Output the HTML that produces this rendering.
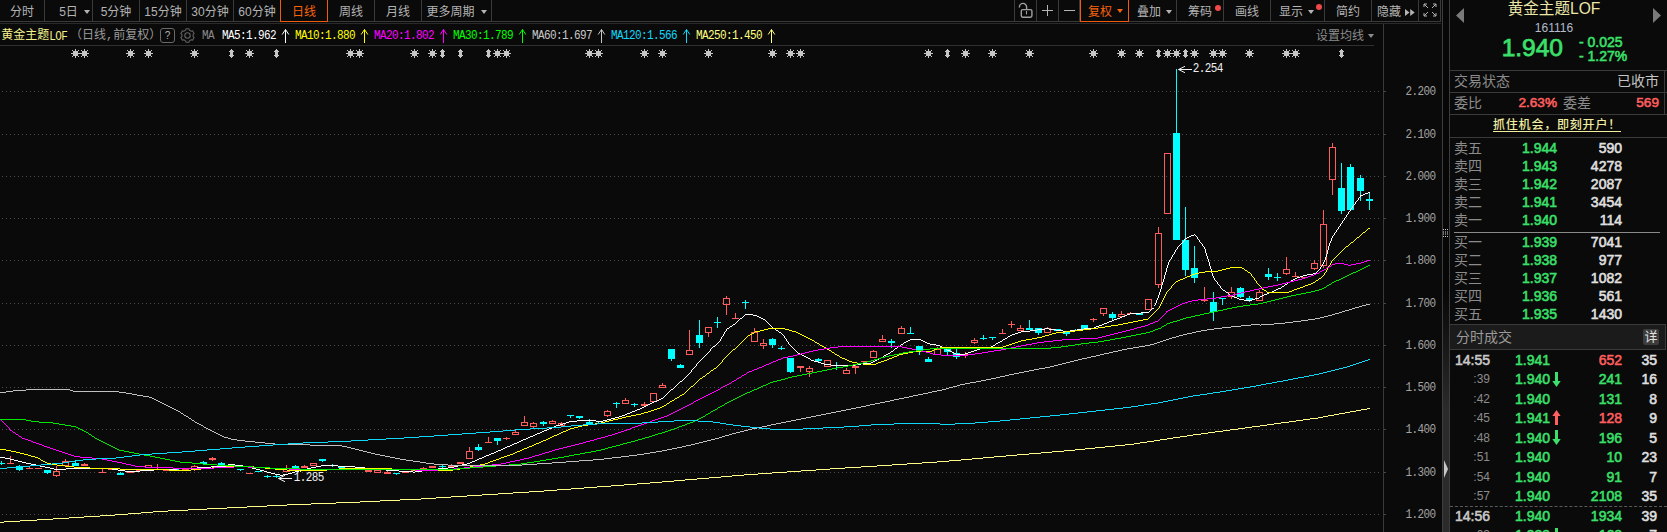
<!DOCTYPE html>
<html lang="zh-CN"><head><meta charset="utf-8"><title>黄金主题LOF 161116 日线</title>
<style>

html,body{margin:0;padding:0;background:#0a0a0a;}
body{width:1667px;height:532px;overflow:hidden;position:relative;font-family:"Liberation Sans","Noto Sans CJK SC",sans-serif;color:#b8b8b8;}
.abs{position:absolute;white-space:nowrap;}
#root{position:absolute;left:0;top:0;width:1667px;height:532px;overflow:hidden;background:#0a0a0a;}
.tab{position:absolute;top:0;height:21px;line-height:24px;box-sizing:border-box;border-right:1px solid #3a3a3a;text-align:center;font-size:12px;color:#b4b4b4;white-space:nowrap;}
.tab.act{border:1px solid #ee5c0c;border-top:none;color:#f8640f;line-height:24px;height:22px;z-index:2;}
.mono{font-family:"Liberation Mono","Noto Sans Mono CJK SC",monospace;font-size:11px;letter-spacing:-0.6px;display:inline-block;transform:scaleY(1.1);transform-origin:0 0;}
.song{font-family:"Liberation Mono","Noto Sans CJK SC",sans-serif;}
.hl{position:absolute;height:1px;background:#3a3a3a;}
.vl{position:absolute;width:1px;background:#3a3a3a;}
.b{font-weight:normal;-webkit-text-stroke:0.55px;}
.g{color:#3be06a;}
.r{color:#ff5f5f;}
.w{color:#e0e0e0;}
.rp{position:absolute;white-space:nowrap;font-size:14px;line-height:18px;height:18px;}
.rt{text-align:right;}

</style></head><body><div id="root">
<div class="tab" style="left:0px;width:45px">分时</div>
<div class="tab" style="left:45px;width:48px;padding-left:12px">5日<span style="display:inline-block;width:0;height:0;border-left:3px solid transparent;border-right:3px solid transparent;border-top:4px solid #b4b4b4;margin-left:6px;vertical-align:2px"></span></div>
<div class="tab" style="left:93px;width:47px">5分钟</div>
<div class="tab" style="left:140px;width:47px">15分钟</div>
<div class="tab" style="left:187px;width:47px">30分钟</div>
<div class="tab" style="left:234px;width:47px">60分钟</div>
<div class="tab act" style="left:280px;width:48px">日线</div>
<div class="tab" style="left:328px;width:47px">周线</div>
<div class="tab" style="left:375px;width:47px">月线</div>
<div class="tab" style="left:422px;width:70px">更多周期<span style="display:inline-block;width:0;height:0;border-left:3px solid transparent;border-right:3px solid transparent;border-top:4px solid #b4b4b4;margin-left:6px;vertical-align:2px"></span></div>
<div class="vl" style="left:1014px;top:0;height:21px"></div>
<div class="tab" style="left:1014px;width:23px"><svg width="20" height="20" viewBox="0 0 20 20" style="position:absolute;left:3px;top:0px" fill="none" stroke="#a0a0a0" stroke-width="1.4"><rect x="4.3" y="9.6" width="10.6" height="7.6" rx="1.4"/><path d="M2.4 7.4V7A3.6 3.6 0 0 1 9.6 7V9.6"/><path d="M9.5 11v3.4" stroke-width="1.1"/></svg></div>
<div class="tab" style="left:1037px;width:22px"><svg width="12" height="12" viewBox="0 0 12 12" style="position:absolute;left:4px;top:4px" stroke="#b4b4b4" stroke-width="1" shape-rendering="crispEdges"><path d="M6.5 1V12M1 6.5H12"/></svg></div>
<div class="tab" style="left:1059px;width:21px"><svg width="12" height="12" viewBox="0 0 12 12" style="position:absolute;left:4px;top:4px" stroke="#b4b4b4" stroke-width="1" shape-rendering="crispEdges"><path d="M1 6.5H12"/></svg></div>
<div class="tab act" style="left:1080px;width:49px;text-align:left;padding-left:7px">复权<span style="display:inline-block;width:0;height:0;border-left:3px solid transparent;border-right:3px solid transparent;border-top:4px solid #f8640f;margin-left:5px;vertical-align:3px"></span></div>
<div class="tab" style="left:1129px;width:48px;text-align:left;padding-left:8px">叠加<span style="display:inline-block;width:0;height:0;border-left:3px solid transparent;border-right:3px solid transparent;border-top:4px solid #b4b4b4;margin-left:5px;vertical-align:2px"></span></div>
<div class="tab" style="left:1177px;width:47px;text-align:left;padding-left:11px">筹码<span style="position:absolute;right:2px;top:5px;width:6px;height:6px;border-radius:3px;background:#f04848"></span></div>
<div class="tab" style="left:1224px;width:47px">画线</div>
<div class="tab" style="left:1271px;width:54px;text-align:left;padding-left:8px">显示<span style="display:inline-block;width:0;height:0;border-left:3px solid transparent;border-right:3px solid transparent;border-top:4px solid #b4b4b4;margin-left:5px;vertical-align:2px"></span><span style="position:absolute;right:2px;top:4px;width:6px;height:6px;border-radius:3px;background:#f04848"></span></div>
<div class="tab" style="left:1325px;width:47px">简约</div>
<div class="tab" style="left:1372px;width:47px;text-align:left;padding-left:5px">隐藏<svg width="10" height="7" viewBox="0 0 10 7" style="margin-left:4px;vertical-align:0px"><path d="M0 0L4.5 3.5L0 7ZM5.2 0L9.7 3.5L5.2 7Z" fill="#b4b4b4"/></svg></div>
<div class="tab" style="left:1419px;width:22px"><svg width="14" height="14" viewBox="0 0 14 14" style="position:absolute;left:4px;top:3px" fill="none" stroke="#b4b4b4" stroke-width="1"><path d="M1 4V1H4M1 1L5 5M10 1H13V4M13 1L9 5M1 10V13H4M1 13L5 9M10 13H13V10M13 13L9 9"/></svg></div>
<div class="hl" style="left:0;top:21px;width:1441px"></div>
<div class="hl" style="left:0;top:23px;width:1441px;background:#2a2a2a"></div>
<div class="abs song" style="left:1.3px;top:28px;font-size:12px;line-height:16px;color:#f5f08a;letter-spacing:0">黄金主题<span class="mono" style="font-size:11px;line-height:14px;vertical-align:top;position:relative;top:0.6px">LOF</span></div>
<div class="abs song" style="left:70px;top:28px;font-size:12px;line-height:16px;color:#9a9a9a">（日线,前复权）</div>
<div class="abs" style="left:160px;top:28px;width:15px;height:15px;box-sizing:border-box;border:1px solid #6a6a6a;border-radius:3px;font-size:10px;line-height:13px;text-align:center;color:#b0b0b0">?</div>
<svg class="abs" style="left:180.4px;top:27.6px" width="15" height="15" viewBox="0 0 15 15" fill="none" stroke="#626262" stroke-width="1.1" stroke-linejoin="round"><path d="M9.05 0.78L5.95 0.78L5.64 2.11L3.76 3.20L2.45 2.79L0.90 5.48L1.90 6.41L1.90 8.59L0.90 9.52L2.45 12.21L3.76 11.80L5.64 12.89L5.95 14.22L9.05 14.22L9.36 12.89L11.24 11.80L12.55 12.21L14.10 9.52L13.10 8.59L13.10 6.41L14.10 5.48L12.55 2.79L11.24 3.20L9.36 2.11Z"/><circle cx="7.5" cy="7.5" r="2.7"/></svg>
<div class="abs mono" style="left:202px;top:28.1px;line-height:14px;color:#8a8a8a">MA</div>
<div class="abs mono" style="left:222px;top:28.1px;line-height:14px;color:#ffffff">MA5:1.962</div>
<svg class="abs" style="left:281px;top:28px" width="9" height="16" viewBox="0 0 9 16" fill="none" stroke="#ffffff" stroke-width="1"><path d="M4.5 15V1.5M1.2 6.5L4.5 1.5L7.8 6.5"/></svg>
<div class="abs mono" style="left:295px;top:28.1px;line-height:14px;color:#ffff00">MA10:1.880</div>
<svg class="abs" style="left:360px;top:28px" width="9" height="16" viewBox="0 0 9 16" fill="none" stroke="#ffff00" stroke-width="1"><path d="M4.5 15V1.5M1.2 6.5L4.5 1.5L7.8 6.5"/></svg>
<div class="abs mono" style="left:374px;top:28.1px;line-height:14px;color:#ff00ff">MA20:1.802</div>
<svg class="abs" style="left:439px;top:28px" width="9" height="16" viewBox="0 0 9 16" fill="none" stroke="#ff00ff" stroke-width="1"><path d="M4.5 15V1.5M1.2 6.5L4.5 1.5L7.8 6.5"/></svg>
<div class="abs mono" style="left:453px;top:28.1px;line-height:14px;color:#00ff00">MA30:1.789</div>
<svg class="abs" style="left:518px;top:28px" width="9" height="16" viewBox="0 0 9 16" fill="none" stroke="#00ff00" stroke-width="1"><path d="M4.5 15V1.5M1.2 6.5L4.5 1.5L7.8 6.5"/></svg>
<div class="abs mono" style="left:532px;top:28.1px;line-height:14px;color:#c8c8c8">MA60:1.697</div>
<svg class="abs" style="left:597px;top:28px" width="9" height="16" viewBox="0 0 9 16" fill="none" stroke="#c8c8c8" stroke-width="1"><path d="M4.5 15V1.5M1.2 6.5L4.5 1.5L7.8 6.5"/></svg>
<div class="abs mono" style="left:611px;top:28.1px;line-height:14px;color:#10d8f8">MA120:1.566</div>
<svg class="abs" style="left:682px;top:28px" width="9" height="16" viewBox="0 0 9 16" fill="none" stroke="#10d8f8" stroke-width="1"><path d="M4.5 15V1.5M1.2 6.5L4.5 1.5L7.8 6.5"/></svg>
<div class="abs mono" style="left:696px;top:28.1px;line-height:14px;color:#ffff80">MA250:1.450</div>
<svg class="abs" style="left:767px;top:28px" width="9" height="16" viewBox="0 0 9 16" fill="none" stroke="#ffff80" stroke-width="1"><path d="M4.5 15V1.5M1.2 6.5L4.5 1.5L7.8 6.5"/></svg>
<div class="abs" style="left:1316px;top:28px;font-size:12px;line-height:16px;color:#8c8c8c">设置均线<span style="display:inline-block;width:0;height:0;border-left:3px solid transparent;border-right:3px solid transparent;border-top:4px solid #8c8c8c;margin-left:4px;vertical-align:2px"></span></div>
<div class="hl" style="left:0;top:45px;width:1374px;background:#303030"></div>
<svg class="abs" style="left:0;top:0" width="1442" height="532" viewBox="0 0 1442 532">
<line x1="2" y1="91.5" x2="1380" y2="91.5" stroke="#4c4c4c" stroke-width="1" stroke-dasharray="1 3"/>
<line x1="1384" y1="91.5" x2="1386" y2="91.5" stroke="#484848" stroke-width="1"/>
<text transform="translate(1405.5 95.1) scale(1 1.1)" font-family="Liberation Mono,monospace" font-size="11" letter-spacing="-0.6" fill="#a4a4a4">2.200</text>
<line x1="2" y1="134.5" x2="1380" y2="134.5" stroke="#4c4c4c" stroke-width="1" stroke-dasharray="1 3"/>
<line x1="1384" y1="134.5" x2="1386" y2="134.5" stroke="#484848" stroke-width="1"/>
<text transform="translate(1405.5 138.1) scale(1 1.1)" font-family="Liberation Mono,monospace" font-size="11" letter-spacing="-0.6" fill="#a4a4a4">2.100</text>
<line x1="2" y1="176.5" x2="1380" y2="176.5" stroke="#4c4c4c" stroke-width="1" stroke-dasharray="1 3"/>
<line x1="1384" y1="176.5" x2="1386" y2="176.5" stroke="#484848" stroke-width="1"/>
<text transform="translate(1405.5 180.1) scale(1 1.1)" font-family="Liberation Mono,monospace" font-size="11" letter-spacing="-0.6" fill="#a4a4a4">2.000</text>
<line x1="2" y1="218.5" x2="1380" y2="218.5" stroke="#4c4c4c" stroke-width="1" stroke-dasharray="1 3"/>
<line x1="1384" y1="218.5" x2="1386" y2="218.5" stroke="#484848" stroke-width="1"/>
<text transform="translate(1405.5 222.1) scale(1 1.1)" font-family="Liberation Mono,monospace" font-size="11" letter-spacing="-0.6" fill="#a4a4a4">1.900</text>
<line x1="2" y1="260.5" x2="1380" y2="260.5" stroke="#4c4c4c" stroke-width="1" stroke-dasharray="1 3"/>
<line x1="1384" y1="260.5" x2="1386" y2="260.5" stroke="#484848" stroke-width="1"/>
<text transform="translate(1405.5 264.1) scale(1 1.1)" font-family="Liberation Mono,monospace" font-size="11" letter-spacing="-0.6" fill="#a4a4a4">1.800</text>
<line x1="2" y1="303.5" x2="1380" y2="303.5" stroke="#4c4c4c" stroke-width="1" stroke-dasharray="1 3"/>
<line x1="1384" y1="303.5" x2="1386" y2="303.5" stroke="#484848" stroke-width="1"/>
<text transform="translate(1405.5 307.1) scale(1 1.1)" font-family="Liberation Mono,monospace" font-size="11" letter-spacing="-0.6" fill="#a4a4a4">1.700</text>
<line x1="2" y1="345.5" x2="1380" y2="345.5" stroke="#4c4c4c" stroke-width="1" stroke-dasharray="1 3"/>
<line x1="1384" y1="345.5" x2="1386" y2="345.5" stroke="#484848" stroke-width="1"/>
<text transform="translate(1405.5 349.1) scale(1 1.1)" font-family="Liberation Mono,monospace" font-size="11" letter-spacing="-0.6" fill="#a4a4a4">1.600</text>
<line x1="2" y1="387.5" x2="1380" y2="387.5" stroke="#4c4c4c" stroke-width="1" stroke-dasharray="1 3"/>
<line x1="1384" y1="387.5" x2="1386" y2="387.5" stroke="#484848" stroke-width="1"/>
<text transform="translate(1405.5 391.1) scale(1 1.1)" font-family="Liberation Mono,monospace" font-size="11" letter-spacing="-0.6" fill="#a4a4a4">1.500</text>
<line x1="2" y1="429.5" x2="1380" y2="429.5" stroke="#4c4c4c" stroke-width="1" stroke-dasharray="1 3"/>
<line x1="1384" y1="429.5" x2="1386" y2="429.5" stroke="#484848" stroke-width="1"/>
<text transform="translate(1405.5 433.1) scale(1 1.1)" font-family="Liberation Mono,monospace" font-size="11" letter-spacing="-0.6" fill="#a4a4a4">1.400</text>
<line x1="2" y1="472.5" x2="1380" y2="472.5" stroke="#4c4c4c" stroke-width="1" stroke-dasharray="1 3"/>
<line x1="1384" y1="472.5" x2="1386" y2="472.5" stroke="#484848" stroke-width="1"/>
<text transform="translate(1405.5 476.1) scale(1 1.1)" font-family="Liberation Mono,monospace" font-size="11" letter-spacing="-0.6" fill="#a4a4a4">1.300</text>
<line x1="2" y1="514.5" x2="1380" y2="514.5" stroke="#4c4c4c" stroke-width="1" stroke-dasharray="1 3"/>
<line x1="1384" y1="514.5" x2="1386" y2="514.5" stroke="#484848" stroke-width="1"/>
<text transform="translate(1405.5 518.1) scale(1 1.1)" font-family="Liberation Mono,monospace" font-size="11" letter-spacing="-0.6" fill="#a4a4a4">1.200</text>
<line x1="1383.5" y1="24" x2="1383.5" y2="532" stroke="#3a3a3a" stroke-width="1"/>
<path d="M75 49h1v9h-1zM71 53h9v1h-9zM73 51h5v5h-5zM72 50h1v1h-1zM78 50h1v1h-1zM72 56h1v1h-1zM78 56h1v1h-1zM84 49h1v9h-1zM80 53h9v1h-9zM82 51h5v5h-5zM81 50h1v1h-1zM87 50h1v1h-1zM81 56h1v1h-1zM87 56h1v1h-1zM130 49h1v9h-1zM126 53h9v1h-9zM128 51h5v5h-5zM127 50h1v1h-1zM133 50h1v1h-1zM127 56h1v1h-1zM133 56h1v1h-1zM148 49h1v9h-1zM144 53h9v1h-9zM146 51h5v5h-5zM145 50h1v1h-1zM151 50h1v1h-1zM145 56h1v1h-1zM151 56h1v1h-1zM194 49h1v9h-1zM190 53h9v1h-9zM192 51h5v5h-5zM191 50h1v1h-1zM197 50h1v1h-1zM191 56h1v1h-1zM197 56h1v1h-1zM231 49h1v9h-1zM230 50h3v7h-3zM229 51h5v1h-5zM229 55h5v1h-5zM249 49h1v9h-1zM245 53h9v1h-9zM247 51h5v5h-5zM246 50h1v1h-1zM252 50h1v1h-1zM246 56h1v1h-1zM252 56h1v1h-1zM276 49h1v9h-1zM275 50h3v7h-3zM274 51h5v1h-5zM274 55h5v1h-5zM350 49h1v9h-1zM346 53h9v1h-9zM348 51h5v5h-5zM347 50h1v1h-1zM353 50h1v1h-1zM347 56h1v1h-1zM353 56h1v1h-1zM359 49h1v9h-1zM355 53h9v1h-9zM357 51h5v5h-5zM356 50h1v1h-1zM362 50h1v1h-1zM356 56h1v1h-1zM362 56h1v1h-1zM414 49h1v9h-1zM410 53h9v1h-9zM412 51h5v5h-5zM411 50h1v1h-1zM417 50h1v1h-1zM411 56h1v1h-1zM417 56h1v1h-1zM432 49h1v9h-1zM428 53h9v1h-9zM430 51h5v5h-5zM429 50h1v1h-1zM435 50h1v1h-1zM429 56h1v1h-1zM435 56h1v1h-1zM442 49h1v9h-1zM441 50h3v7h-3zM440 51h5v1h-5zM440 55h5v1h-5zM460 49h1v9h-1zM459 50h3v7h-3zM458 51h5v1h-5zM458 55h5v1h-5zM488 49h1v9h-1zM487 50h3v7h-3zM486 51h5v1h-5zM486 55h5v1h-5zM497 49h1v9h-1zM493 53h9v1h-9zM495 51h5v5h-5zM494 50h1v1h-1zM500 50h1v1h-1zM494 56h1v1h-1zM500 56h1v1h-1zM506 49h1v9h-1zM502 53h9v1h-9zM504 51h5v5h-5zM503 50h1v1h-1zM509 50h1v1h-1zM503 56h1v1h-1zM509 56h1v1h-1zM589 49h1v9h-1zM585 53h9v1h-9zM587 51h5v5h-5zM586 50h1v1h-1zM592 50h1v1h-1zM586 56h1v1h-1zM592 56h1v1h-1zM598 49h1v9h-1zM594 53h9v1h-9zM596 51h5v5h-5zM595 50h1v1h-1zM601 50h1v1h-1zM595 56h1v1h-1zM601 56h1v1h-1zM644 49h1v9h-1zM640 53h9v1h-9zM642 51h5v5h-5zM641 50h1v1h-1zM647 50h1v1h-1zM641 56h1v1h-1zM647 56h1v1h-1zM662 49h1v9h-1zM658 53h9v1h-9zM660 51h5v5h-5zM659 50h1v1h-1zM665 50h1v1h-1zM659 56h1v1h-1zM665 56h1v1h-1zM708 49h1v9h-1zM704 53h9v1h-9zM706 51h5v5h-5zM705 50h1v1h-1zM711 50h1v1h-1zM705 56h1v1h-1zM711 56h1v1h-1zM772 49h1v9h-1zM768 53h9v1h-9zM770 51h5v5h-5zM769 50h1v1h-1zM775 50h1v1h-1zM769 56h1v1h-1zM775 56h1v1h-1zM790 49h1v9h-1zM786 53h9v1h-9zM788 51h5v5h-5zM787 50h1v1h-1zM793 50h1v1h-1zM787 56h1v1h-1zM793 56h1v1h-1zM800 49h1v9h-1zM796 53h9v1h-9zM798 51h5v5h-5zM797 50h1v1h-1zM803 50h1v1h-1zM797 56h1v1h-1zM803 56h1v1h-1zM928 49h1v9h-1zM924 53h9v1h-9zM926 51h5v5h-5zM925 50h1v1h-1zM931 50h1v1h-1zM925 56h1v1h-1zM931 56h1v1h-1zM947 49h1v9h-1zM946 50h3v7h-3zM945 51h5v1h-5zM945 55h5v1h-5zM965 49h1v9h-1zM961 53h9v1h-9zM963 51h5v5h-5zM962 50h1v1h-1zM968 50h1v1h-1zM962 56h1v1h-1zM968 56h1v1h-1zM992 49h1v9h-1zM988 53h9v1h-9zM990 51h5v5h-5zM989 50h1v1h-1zM995 50h1v1h-1zM989 56h1v1h-1zM995 56h1v1h-1zM1029 49h1v9h-1zM1025 53h9v1h-9zM1027 51h5v5h-5zM1026 50h1v1h-1zM1032 50h1v1h-1zM1026 56h1v1h-1zM1032 56h1v1h-1zM1093 49h1v9h-1zM1089 53h9v1h-9zM1091 51h5v5h-5zM1090 50h1v1h-1zM1096 50h1v1h-1zM1090 56h1v1h-1zM1096 56h1v1h-1zM1121 49h1v9h-1zM1117 53h9v1h-9zM1119 51h5v5h-5zM1118 50h1v1h-1zM1124 50h1v1h-1zM1118 56h1v1h-1zM1124 56h1v1h-1zM1139 49h1v9h-1zM1135 53h9v1h-9zM1137 51h5v5h-5zM1136 50h1v1h-1zM1142 50h1v1h-1zM1136 56h1v1h-1zM1142 56h1v1h-1zM1158 49h1v9h-1zM1157 50h3v7h-3zM1156 51h5v1h-5zM1156 55h5v1h-5zM1167 49h1v9h-1zM1163 53h9v1h-9zM1165 51h5v5h-5zM1164 50h1v1h-1zM1170 50h1v1h-1zM1164 56h1v1h-1zM1170 56h1v1h-1zM1176 49h1v9h-1zM1172 53h9v1h-9zM1174 51h5v5h-5zM1173 50h1v1h-1zM1179 50h1v1h-1zM1173 56h1v1h-1zM1179 56h1v1h-1zM1185 49h1v9h-1zM1184 50h3v7h-3zM1183 51h5v1h-5zM1183 55h5v1h-5zM1194 49h1v9h-1zM1190 53h9v1h-9zM1192 51h5v5h-5zM1191 50h1v1h-1zM1197 50h1v1h-1zM1191 56h1v1h-1zM1197 56h1v1h-1zM1213 49h1v9h-1zM1209 53h9v1h-9zM1211 51h5v5h-5zM1210 50h1v1h-1zM1216 50h1v1h-1zM1210 56h1v1h-1zM1216 56h1v1h-1zM1222 49h1v9h-1zM1218 53h9v1h-9zM1220 51h5v5h-5zM1219 50h1v1h-1zM1225 50h1v1h-1zM1219 56h1v1h-1zM1225 56h1v1h-1zM1249 49h1v9h-1zM1245 53h9v1h-9zM1247 51h5v5h-5zM1246 50h1v1h-1zM1252 50h1v1h-1zM1246 56h1v1h-1zM1252 56h1v1h-1zM1286 49h1v9h-1zM1282 53h9v1h-9zM1284 51h5v5h-5zM1283 50h1v1h-1zM1289 50h1v1h-1zM1283 56h1v1h-1zM1289 56h1v1h-1zM1295 49h1v9h-1zM1291 53h9v1h-9zM1293 51h5v5h-5zM1292 50h1v1h-1zM1298 50h1v1h-1zM1292 56h1v1h-1zM1298 56h1v1h-1zM1341 49h1v9h-1zM1340 50h3v7h-3zM1339 51h5v1h-5zM1339 55h5v1h-5z" fill="#c6c6c6" shape-rendering="crispEdges"/>
<path d="M1.5 461V465" stroke="#00ffff" stroke-width="1"/>
<rect x="-2" y="463" width="7" height="1" fill="#00ffff"/>
<path d="M10.5 456V464" stroke="#ff5c5c" stroke-width="1"/>
<rect x="7" y="463" width="7" height="1" fill="#ff5c5c"/>
<path d="M19.5 465V471" stroke="#00ffff" stroke-width="1"/>
<rect x="16" y="466" width="7" height="4" fill="#00ffff"/>
<path d="M29.5 467V469" stroke="#ff5c5c" stroke-width="1"/>
<rect x="26" y="468" width="7" height="1" fill="#ff5c5c"/>
<path d="M38.5 468V469" stroke="#ff5c5c" stroke-width="1"/>
<rect x="35" y="468" width="7" height="1" fill="#ff5c5c"/>
<path d="M47.5 470V474" stroke="#00ffff" stroke-width="1"/>
<rect x="44" y="470" width="7" height="3" fill="#00ffff"/>
<path d="M56.5 466V471M56.5 476V477" stroke="#ff5c5c" stroke-width="1"/>
<rect x="53.5" y="471.5" width="6" height="4" fill="none" stroke="#ff5c5c" stroke-width="1"/>
<path d="M65.5 459V461M65.5 466V467" stroke="#ff5c5c" stroke-width="1"/>
<rect x="62.5" y="461.5" width="6" height="4" fill="none" stroke="#ff5c5c" stroke-width="1"/>
<path d="M75.5 460V466" stroke="#00ffff" stroke-width="1"/>
<rect x="72" y="463" width="7" height="3" fill="#00ffff"/>
<path d="M84.5 463V466" stroke="#ff5c5c" stroke-width="1"/>
<rect x="81" y="464" width="7" height="2" fill="#ff5c5c"/>
<path d="M93.5 468V469" stroke="#00ffff" stroke-width="1"/>
<rect x="90" y="468" width="7" height="1" fill="#00ffff"/>
<path d="M102.5 469V473" stroke="#ff5c5c" stroke-width="1"/>
<rect x="99" y="472" width="7" height="1" fill="#ff5c5c"/>
<path d="M111.5 468V470" stroke="#ff5c5c" stroke-width="1"/>
<rect x="108" y="469" width="7" height="1" fill="#ff5c5c"/>
<path d="M120.5 472V475" stroke="#00ffff" stroke-width="1"/>
<rect x="117" y="473" width="7" height="2" fill="#00ffff"/>
<path d="M130.5 472V473" stroke="#ff5c5c" stroke-width="1"/>
<rect x="127" y="472" width="7" height="1" fill="#ff5c5c"/>
<path d="M139.5 470V471" stroke="#ff5c5c" stroke-width="1"/>
<rect x="136" y="470" width="7" height="1" fill="#ff5c5c"/>
<path d="M148.5 465V465M148.5 468V468" stroke="#ff5c5c" stroke-width="1"/>
<rect x="145.5" y="465.5" width="6" height="2" fill="none" stroke="#ff5c5c" stroke-width="1"/>
<path d="M157.5 464V469" stroke="#ff5c5c" stroke-width="1"/>
<rect x="154" y="467" width="7" height="1" fill="#ff5c5c"/>
<path d="M166.5 470V471" stroke="#ff5c5c" stroke-width="1"/>
<rect x="163" y="470" width="7" height="1" fill="#ff5c5c"/>
<path d="M175.5 469V470" stroke="#00ffff" stroke-width="1"/>
<rect x="172" y="469" width="7" height="1" fill="#00ffff"/>
<path d="M185.5 469V470" stroke="#ff5c5c" stroke-width="1"/>
<rect x="182" y="469" width="7" height="1" fill="#ff5c5c"/>
<path d="M194.5 465V466M194.5 469V471" stroke="#ff5c5c" stroke-width="1"/>
<rect x="191.5" y="466.5" width="6" height="2" fill="none" stroke="#ff5c5c" stroke-width="1"/>
<path d="M203.5 461V464" stroke="#00ffff" stroke-width="1"/>
<rect x="200" y="462" width="7" height="2" fill="#00ffff"/>
<path d="M212.5 457V461" stroke="#ff5c5c" stroke-width="1"/>
<rect x="209" y="458" width="7" height="2" fill="#ff5c5c"/>
<path d="M221.5 462V465" stroke="#00ffff" stroke-width="1"/>
<rect x="218" y="463" width="7" height="2" fill="#00ffff"/>
<path d="M231.5 465V466" stroke="#00ffff" stroke-width="1"/>
<rect x="228" y="465" width="7" height="1" fill="#00ffff"/>
<path d="M240.5 469V471" stroke="#00ffff" stroke-width="1"/>
<rect x="237" y="469" width="7" height="1" fill="#00ffff"/>
<path d="M249.5 473V474" stroke="#ff5c5c" stroke-width="1"/>
<rect x="246" y="473" width="7" height="1" fill="#ff5c5c"/>
<path d="M258.5 471V472" stroke="#00ffff" stroke-width="1"/>
<rect x="255" y="471" width="7" height="1" fill="#00ffff"/>
<path d="M267.5 475V478" stroke="#00ffff" stroke-width="1"/>
<rect x="264" y="476" width="7" height="1" fill="#00ffff"/>
<path d="M276.5 475V478" stroke="#00ffff" stroke-width="1"/>
<rect x="273" y="476" width="7" height="1" fill="#00ffff"/>
<path d="M286.5 465V468M286.5 472V472" stroke="#ff5c5c" stroke-width="1"/>
<rect x="283.5" y="468.5" width="6" height="3" fill="none" stroke="#ff5c5c" stroke-width="1"/>
<path d="M295.5 465V468" stroke="#00ffff" stroke-width="1"/>
<rect x="292" y="466" width="7" height="2" fill="#00ffff"/>
<path d="M304.5 465V468" stroke="#ff5c5c" stroke-width="1"/>
<rect x="301" y="466" width="7" height="2" fill="#ff5c5c"/>
<path d="M313.5 463V463M313.5 466V466" stroke="#ff5c5c" stroke-width="1"/>
<rect x="310.5" y="463.5" width="6" height="2" fill="none" stroke="#ff5c5c" stroke-width="1"/>
<path d="M322.5 459V462" stroke="#00ffff" stroke-width="1"/>
<rect x="319" y="459" width="7" height="2" fill="#00ffff"/>
<path d="M332.5 464V467" stroke="#00ffff" stroke-width="1"/>
<rect x="329" y="465" width="7" height="1" fill="#00ffff"/>
<path d="M341.5 467V468" stroke="#00ffff" stroke-width="1"/>
<rect x="338" y="467" width="7" height="1" fill="#00ffff"/>
<path d="M350.5 469V470" stroke="#ff5c5c" stroke-width="1"/>
<rect x="347" y="469" width="7" height="1" fill="#ff5c5c"/>
<path d="M359.5 469V470" stroke="#00ffff" stroke-width="1"/>
<rect x="356" y="469" width="7" height="1" fill="#00ffff"/>
<path d="M368.5 470V472" stroke="#ff5c5c" stroke-width="1"/>
<rect x="365" y="470" width="7" height="2" fill="#ff5c5c"/>
<path d="M377.5 470V470M377.5 473V473" stroke="#ff5c5c" stroke-width="1"/>
<rect x="374.5" y="470.5" width="6" height="2" fill="none" stroke="#ff5c5c" stroke-width="1"/>
<path d="M387.5 470V474" stroke="#ff5c5c" stroke-width="1"/>
<rect x="384" y="472" width="7" height="2" fill="#ff5c5c"/>
<path d="M396.5 473V475" stroke="#00ffff" stroke-width="1"/>
<rect x="393" y="473" width="7" height="1" fill="#00ffff"/>
<path d="M405.5 472V473" stroke="#ff5c5c" stroke-width="1"/>
<rect x="402" y="472" width="7" height="1" fill="#ff5c5c"/>
<path d="M414.5 470V471" stroke="#ff5c5c" stroke-width="1"/>
<rect x="411" y="470" width="7" height="1" fill="#ff5c5c"/>
<path d="M423.5 467V469" stroke="#ff5c5c" stroke-width="1"/>
<rect x="420" y="468" width="7" height="1" fill="#ff5c5c"/>
<path d="M432.5 466V468" stroke="#ff5c5c" stroke-width="1"/>
<rect x="429" y="466" width="7" height="2" fill="#ff5c5c"/>
<path d="M442.5 465V469" stroke="#00ffff" stroke-width="1"/>
<rect x="439" y="466" width="7" height="1" fill="#00ffff"/>
<path d="M451.5 464V467" stroke="#ff5c5c" stroke-width="1"/>
<rect x="448" y="466" width="7" height="1" fill="#ff5c5c"/>
<path d="M460.5 462V464" stroke="#ff5c5c" stroke-width="1"/>
<rect x="457" y="462" width="7" height="2" fill="#ff5c5c"/>
<path d="M469.5 447V451M469.5 459V459" stroke="#ff5c5c" stroke-width="1"/>
<rect x="466.5" y="451.5" width="6" height="7" fill="none" stroke="#ff5c5c" stroke-width="1"/>
<path d="M478.5 444V451" stroke="#00ffff" stroke-width="1"/>
<rect x="475" y="447" width="7" height="3" fill="#00ffff"/>
<path d="M488.5 437V443" stroke="#ff5c5c" stroke-width="1"/>
<rect x="485" y="442" width="7" height="1" fill="#ff5c5c"/>
<path d="M497.5 438V445" stroke="#00ffff" stroke-width="1"/>
<rect x="494" y="438" width="7" height="3" fill="#00ffff"/>
<path d="M506.5 437V440" stroke="#ff5c5c" stroke-width="1"/>
<rect x="503" y="438" width="7" height="1" fill="#ff5c5c"/>
<path d="M515.5 430V432M515.5 435V435" stroke="#ff5c5c" stroke-width="1"/>
<rect x="512.5" y="432.5" width="6" height="2" fill="none" stroke="#ff5c5c" stroke-width="1"/>
<path d="M524.5 416V422M524.5 426V426" stroke="#ff5c5c" stroke-width="1"/>
<rect x="521.5" y="422.5" width="6" height="3" fill="none" stroke="#ff5c5c" stroke-width="1"/>
<path d="M533.5 422V423M533.5 427V428" stroke="#ff5c5c" stroke-width="1"/>
<rect x="530.5" y="423.5" width="6" height="3" fill="none" stroke="#ff5c5c" stroke-width="1"/>
<path d="M543.5 421V426" stroke="#00ffff" stroke-width="1"/>
<rect x="540" y="422" width="7" height="2" fill="#00ffff"/>
<path d="M552.5 420V421M552.5 424V424" stroke="#ff5c5c" stroke-width="1"/>
<rect x="549.5" y="421.5" width="6" height="2" fill="none" stroke="#ff5c5c" stroke-width="1"/>
<path d="M561.5 422V423M561.5 426V426" stroke="#ff5c5c" stroke-width="1"/>
<rect x="558.5" y="423.5" width="6" height="2" fill="none" stroke="#ff5c5c" stroke-width="1"/>
<path d="M570.5 415V418" stroke="#00ffff" stroke-width="1"/>
<rect x="567" y="415" width="7" height="1" fill="#00ffff"/>
<path d="M579.5 416V419" stroke="#00ffff" stroke-width="1"/>
<rect x="576" y="416" width="7" height="2" fill="#00ffff"/>
<path d="M589.5 419V424" stroke="#00ffff" stroke-width="1"/>
<rect x="586" y="422" width="7" height="2" fill="#00ffff"/>
<path d="M598.5 422V424" stroke="#00ffff" stroke-width="1"/>
<rect x="595" y="423" width="7" height="1" fill="#00ffff"/>
<path d="M607.5 410V411M607.5 416V417" stroke="#ff5c5c" stroke-width="1"/>
<rect x="604.5" y="411.5" width="6" height="4" fill="none" stroke="#ff5c5c" stroke-width="1"/>
<path d="M616.5 402V408" stroke="#00ffff" stroke-width="1"/>
<rect x="613" y="403" width="7" height="1" fill="#00ffff"/>
<path d="M625.5 398V400M625.5 404V404" stroke="#ff5c5c" stroke-width="1"/>
<rect x="622.5" y="400.5" width="6" height="3" fill="none" stroke="#ff5c5c" stroke-width="1"/>
<path d="M634.5 403V407" stroke="#00ffff" stroke-width="1"/>
<rect x="631" y="404" width="7" height="1" fill="#00ffff"/>
<path d="M644.5 402V406" stroke="#ff5c5c" stroke-width="1"/>
<rect x="641" y="404" width="7" height="2" fill="#ff5c5c"/>
<path d="M653.5 393V393M653.5 402V402" stroke="#ff5c5c" stroke-width="1"/>
<rect x="650.5" y="393.5" width="6" height="8" fill="none" stroke="#ff5c5c" stroke-width="1"/>
<path d="M662.5 383V385M662.5 388V388" stroke="#ff5c5c" stroke-width="1"/>
<rect x="659.5" y="385.5" width="6" height="2" fill="none" stroke="#ff5c5c" stroke-width="1"/>
<path d="M671.5 349V361" stroke="#00ffff" stroke-width="1"/>
<rect x="668" y="349" width="7" height="10" fill="#00ffff"/>
<path d="M680.5 364V368" stroke="#00ffff" stroke-width="1"/>
<rect x="677" y="365" width="7" height="3" fill="#00ffff"/>
<path d="M689.5 330V350M689.5 355V355" stroke="#ff5c5c" stroke-width="1"/>
<rect x="686.5" y="350.5" width="6" height="4" fill="none" stroke="#ff5c5c" stroke-width="1"/>
<path d="M699.5 320V348" stroke="#00ffff" stroke-width="1"/>
<rect x="696" y="335" width="7" height="8" fill="#00ffff"/>
<path d="M708.5 327V327M708.5 333V337" stroke="#ff5c5c" stroke-width="1"/>
<rect x="705.5" y="327.5" width="6" height="5" fill="none" stroke="#ff5c5c" stroke-width="1"/>
<path d="M717.5 317V328" stroke="#00ffff" stroke-width="1"/>
<rect x="714" y="322" width="7" height="1" fill="#00ffff"/>
<path d="M726.5 296V298M726.5 305V315" stroke="#ff5c5c" stroke-width="1"/>
<rect x="723.5" y="298.5" width="6" height="6" fill="none" stroke="#ff5c5c" stroke-width="1"/>
<path d="M735.5 313V319" stroke="#ff5c5c" stroke-width="1"/>
<rect x="732" y="318" width="7" height="1" fill="#ff5c5c"/>
<path d="M745.5 300V309" stroke="#00ffff" stroke-width="1"/>
<rect x="742" y="302" width="7" height="1" fill="#00ffff"/>
<path d="M754.5 328V332M754.5 342V342" stroke="#ff5c5c" stroke-width="1"/>
<rect x="751.5" y="332.5" width="6" height="9" fill="none" stroke="#ff5c5c" stroke-width="1"/>
<path d="M763.5 339V343M763.5 346V349" stroke="#ff5c5c" stroke-width="1"/>
<rect x="760.5" y="343.5" width="6" height="2" fill="none" stroke="#ff5c5c" stroke-width="1"/>
<path d="M772.5 338V348" stroke="#00ffff" stroke-width="1"/>
<rect x="769" y="339" width="7" height="6" fill="#00ffff"/>
<path d="M781.5 346V350" stroke="#00ffff" stroke-width="1"/>
<rect x="778" y="348" width="7" height="1" fill="#00ffff"/>
<path d="M790.5 358V373" stroke="#00ffff" stroke-width="1"/>
<rect x="787" y="358" width="7" height="14" fill="#00ffff"/>
<path d="M800.5 366V372" stroke="#ff5c5c" stroke-width="1"/>
<rect x="797" y="366" width="7" height="2" fill="#ff5c5c"/>
<path d="M809.5 366V368M809.5 372V377" stroke="#ff5c5c" stroke-width="1"/>
<rect x="806.5" y="368.5" width="6" height="3" fill="none" stroke="#ff5c5c" stroke-width="1"/>
<path d="M818.5 358V363" stroke="#00ffff" stroke-width="1"/>
<rect x="815" y="359" width="7" height="2" fill="#00ffff"/>
<path d="M827.5 360V360M827.5 367V367" stroke="#ff5c5c" stroke-width="1"/>
<rect x="824.5" y="360.5" width="6" height="6" fill="none" stroke="#ff5c5c" stroke-width="1"/>
<path d="M836.5 362V370" stroke="#00ffff" stroke-width="1"/>
<rect x="833" y="365" width="7" height="1" fill="#00ffff"/>
<path d="M846.5 368V370M846.5 374V374" stroke="#ff5c5c" stroke-width="1"/>
<rect x="843.5" y="370.5" width="6" height="3" fill="none" stroke="#ff5c5c" stroke-width="1"/>
<path d="M855.5 364V374" stroke="#ff5c5c" stroke-width="1"/>
<rect x="852" y="366" width="7" height="2" fill="#ff5c5c"/>
<path d="M864.5 361V362" stroke="#ff5c5c" stroke-width="1"/>
<rect x="861" y="361" width="7" height="1" fill="#ff5c5c"/>
<path d="M873.5 350V351M873.5 358V358" stroke="#ff5c5c" stroke-width="1"/>
<rect x="870.5" y="351.5" width="6" height="6" fill="none" stroke="#ff5c5c" stroke-width="1"/>
<path d="M882.5 335V339M882.5 342V342" stroke="#ff5c5c" stroke-width="1"/>
<rect x="879.5" y="339.5" width="6" height="2" fill="none" stroke="#ff5c5c" stroke-width="1"/>
<path d="M891.5 339V348" stroke="#00ffff" stroke-width="1"/>
<rect x="888" y="341" width="7" height="2" fill="#00ffff"/>
<path d="M901.5 326V328M901.5 334V334" stroke="#ff5c5c" stroke-width="1"/>
<rect x="898.5" y="328.5" width="6" height="5" fill="none" stroke="#ff5c5c" stroke-width="1"/>
<path d="M910.5 327V334" stroke="#00ffff" stroke-width="1"/>
<rect x="907" y="333" width="7" height="1" fill="#00ffff"/>
<path d="M919.5 346V355" stroke="#00ffff" stroke-width="1"/>
<rect x="916" y="346" width="7" height="4" fill="#00ffff"/>
<path d="M928.5 357V362" stroke="#00ffff" stroke-width="1"/>
<rect x="925" y="359" width="7" height="3" fill="#00ffff"/>
<path d="M937.5 347V349M937.5 355V355" stroke="#ff5c5c" stroke-width="1"/>
<rect x="934.5" y="349.5" width="6" height="5" fill="none" stroke="#ff5c5c" stroke-width="1"/>
<path d="M947.5 349V355" stroke="#00ffff" stroke-width="1"/>
<rect x="944" y="349" width="7" height="3" fill="#00ffff"/>
<path d="M956.5 347V359" stroke="#00ffff" stroke-width="1"/>
<rect x="953" y="353" width="7" height="4" fill="#00ffff"/>
<path d="M965.5 352V358" stroke="#ff5c5c" stroke-width="1"/>
<rect x="962" y="354" width="7" height="1" fill="#ff5c5c"/>
<path d="M974.5 338V340M974.5 343V344" stroke="#ff5c5c" stroke-width="1"/>
<rect x="971.5" y="340.5" width="6" height="2" fill="none" stroke="#ff5c5c" stroke-width="1"/>
<path d="M983.5 335V340" stroke="#00ffff" stroke-width="1"/>
<rect x="980" y="338" width="7" height="1" fill="#00ffff"/>
<path d="M992.5 337V340" stroke="#00ffff" stroke-width="1"/>
<rect x="989" y="337" width="7" height="1" fill="#00ffff"/>
<path d="M1002.5 329V334" stroke="#ff5c5c" stroke-width="1"/>
<rect x="999" y="333" width="7" height="1" fill="#ff5c5c"/>
<path d="M1011.5 321V328" stroke="#ff5c5c" stroke-width="1"/>
<rect x="1008" y="324" width="7" height="1" fill="#ff5c5c"/>
<path d="M1020.5 325V328M1020.5 331V331" stroke="#ff5c5c" stroke-width="1"/>
<rect x="1017.5" y="328.5" width="6" height="2" fill="none" stroke="#ff5c5c" stroke-width="1"/>
<path d="M1029.5 320V330" stroke="#00ffff" stroke-width="1"/>
<rect x="1026" y="328" width="7" height="2" fill="#00ffff"/>
<path d="M1038.5 328V335" stroke="#00ffff" stroke-width="1"/>
<rect x="1035" y="328" width="7" height="5" fill="#00ffff"/>
<path d="M1047.5 327V328M1047.5 333V333" stroke="#ff5c5c" stroke-width="1"/>
<rect x="1044.5" y="328.5" width="6" height="4" fill="none" stroke="#ff5c5c" stroke-width="1"/>
<path d="M1057.5 329V331" stroke="#00ffff" stroke-width="1"/>
<rect x="1054" y="329" width="7" height="2" fill="#00ffff"/>
<path d="M1066.5 332V336" stroke="#00ffff" stroke-width="1"/>
<rect x="1063" y="332" width="7" height="2" fill="#00ffff"/>
<path d="M1075.5 329V331" stroke="#00ffff" stroke-width="1"/>
<rect x="1072" y="330" width="7" height="1" fill="#00ffff"/>
<path d="M1084.5 325V330" stroke="#00ffff" stroke-width="1"/>
<rect x="1081" y="325" width="7" height="4" fill="#00ffff"/>
<path d="M1093.5 318V322" stroke="#ff5c5c" stroke-width="1"/>
<rect x="1090" y="319" width="7" height="1" fill="#ff5c5c"/>
<path d="M1103.5 308V308M1103.5 314V316" stroke="#ff5c5c" stroke-width="1"/>
<rect x="1100.5" y="308.5" width="6" height="5" fill="none" stroke="#ff5c5c" stroke-width="1"/>
<path d="M1112.5 312V320" stroke="#00ffff" stroke-width="1"/>
<rect x="1109" y="314" width="7" height="4" fill="#00ffff"/>
<path d="M1121.5 311V314M1121.5 317V317" stroke="#ff5c5c" stroke-width="1"/>
<rect x="1118.5" y="314.5" width="6" height="2" fill="none" stroke="#ff5c5c" stroke-width="1"/>
<path d="M1130.5 312V314" stroke="#ff5c5c" stroke-width="1"/>
<rect x="1127" y="313" width="7" height="1" fill="#ff5c5c"/>
<path d="M1139.5 313V315" stroke="#00ffff" stroke-width="1"/>
<rect x="1136" y="313" width="7" height="2" fill="#00ffff"/>
<path d="M1148.5 299V299M1148.5 310V310" stroke="#ff5c5c" stroke-width="1"/>
<rect x="1145.5" y="299.5" width="6" height="10" fill="none" stroke="#ff5c5c" stroke-width="1"/>
<path d="M1158.5 227V233M1158.5 285V288" stroke="#ff5c5c" stroke-width="1"/>
<rect x="1155.5" y="233.5" width="6" height="51" fill="none" stroke="#ff5c5c" stroke-width="1"/>
<path d="M1167.5 153V153M1167.5 214V214" stroke="#ff5c5c" stroke-width="1"/>
<rect x="1164.5" y="153.5" width="6" height="60" fill="none" stroke="#ff5c5c" stroke-width="1"/>
<path d="M1176.5 69V240" stroke="#00ffff" stroke-width="1"/>
<rect x="1173" y="133" width="7" height="107" fill="#00ffff"/>
<path d="M1185.5 207V276" stroke="#00ffff" stroke-width="1"/>
<rect x="1182" y="240" width="7" height="30" fill="#00ffff"/>
<path d="M1194.5 246V283" stroke="#00ffff" stroke-width="1"/>
<rect x="1191" y="268" width="7" height="10" fill="#00ffff"/>
<path d="M1204.5 287V302" stroke="#ff5c5c" stroke-width="1"/>
<rect x="1201" y="300" width="7" height="1" fill="#ff5c5c"/>
<path d="M1213.5 292V321" stroke="#00ffff" stroke-width="1"/>
<rect x="1210" y="302" width="7" height="10" fill="#00ffff"/>
<path d="M1222.5 298V305" stroke="#00ffff" stroke-width="1"/>
<rect x="1219" y="298" width="7" height="1" fill="#00ffff"/>
<path d="M1231.5 287V292M1231.5 297V299" stroke="#ff5c5c" stroke-width="1"/>
<rect x="1228.5" y="292.5" width="6" height="4" fill="none" stroke="#ff5c5c" stroke-width="1"/>
<path d="M1240.5 287V298" stroke="#00ffff" stroke-width="1"/>
<rect x="1237" y="288" width="7" height="9" fill="#00ffff"/>
<path d="M1249.5 296V302" stroke="#00ffff" stroke-width="1"/>
<rect x="1246" y="298" width="7" height="2" fill="#00ffff"/>
<path d="M1259.5 290V292M1259.5 301V301" stroke="#ff5c5c" stroke-width="1"/>
<rect x="1256.5" y="292.5" width="6" height="8" fill="none" stroke="#ff5c5c" stroke-width="1"/>
<path d="M1268.5 268V280" stroke="#00ffff" stroke-width="1"/>
<rect x="1265" y="274" width="7" height="3" fill="#00ffff"/>
<path d="M1277.5 273V281" stroke="#00ffff" stroke-width="1"/>
<rect x="1274" y="277" width="7" height="1" fill="#00ffff"/>
<path d="M1286.5 257V269M1286.5 274V275" stroke="#ff5c5c" stroke-width="1"/>
<rect x="1283.5" y="269.5" width="6" height="4" fill="none" stroke="#ff5c5c" stroke-width="1"/>
<path d="M1295.5 272V277" stroke="#ff5c5c" stroke-width="1"/>
<rect x="1292" y="276" width="7" height="1" fill="#ff5c5c"/>
<path d="M1304.5 277V278" stroke="#ff5c5c" stroke-width="1"/>
<rect x="1301" y="277" width="7" height="1" fill="#ff5c5c"/>
<path d="M1314.5 260V263M1314.5 269V270" stroke="#ff5c5c" stroke-width="1"/>
<rect x="1311.5" y="263.5" width="6" height="5" fill="none" stroke="#ff5c5c" stroke-width="1"/>
<path d="M1323.5 210V224M1323.5 266V268" stroke="#ff5c5c" stroke-width="1"/>
<rect x="1320.5" y="224.5" width="6" height="41" fill="none" stroke="#ff5c5c" stroke-width="1"/>
<path d="M1332.5 143V147M1332.5 180V195" stroke="#ff5c5c" stroke-width="1"/>
<rect x="1329.5" y="147.5" width="6" height="32" fill="none" stroke="#ff5c5c" stroke-width="1"/>
<path d="M1341.5 163V214" stroke="#00ffff" stroke-width="1"/>
<rect x="1338" y="188" width="7" height="23" fill="#00ffff"/>
<path d="M1350.5 164V210" stroke="#00ffff" stroke-width="1"/>
<rect x="1347" y="167" width="7" height="43" fill="#00ffff"/>
<path d="M1360.5 175V201" stroke="#00ffff" stroke-width="1"/>
<rect x="1357" y="178" width="7" height="13" fill="#00ffff"/>
<path d="M1369.5 193V210" stroke="#00ffff" stroke-width="1"/>
<rect x="1366" y="199" width="7" height="2" fill="#00ffff"/>
<path d="M0 457h5v1h-5zM5 458h5v1h-5zM10 459h4v1h-4zM14 460h4v1h-4zM18 461h4v1h-4zM22 462h4v1h-4zM26 463h5v1h-5zM31 464h5v1h-5zM36 465h4v1h-4zM40 466h5v1h-5zM45 467h5v1h-5zM50 468h4v1h-4zM54 469h12v1h-12zM66 468h46v1h-46zM112 469h6v1h-6zM118 470h7v1h-7zM125 471h15v1h-15zM140 470h14v1h-14zM154 469h23v1h-23zM177 468h20v1h-20zM197 467h14v1h-14zM211 466h15v1h-15zM226 465h2v1h-2zM228 464h7v1h-7zM235 465h8v1h-8zM243 466h5v1h-5zM248 467h4v1h-4zM252 468h4v1h-4zM256 469h4v1h-4zM260 470h4v1h-4zM264 471h3v1h-3zM267 472h4v1h-4zM271 473h4v1h-4zM275 474h5v1h-5zM280 475h3v1h-3zM283 474h5v1h-5zM288 473h4v1h-4zM292 472h3v1h-3zM295 471h4v1h-4zM299 470h3v1h-3zM302 469h5v1h-5zM307 468h4v1h-4zM311 467h5v1h-5zM316 466h5v1h-5zM321 465h17v1h-17zM338 466h17v1h-17zM355 467h10v1h-10zM365 468h10v1h-10zM375 469h11v1h-11zM386 470h13v1h-13zM399 471h14v1h-14zM413 472h2v1h-2zM415 471h7v1h-7zM422 470h7v1h-7zM429 469h9v1h-9zM438 468h10v1h-10zM448 467h6v1h-6zM454 466h4v1h-4zM458 465h4v1h-4zM462 464h5v1h-5zM467 463h3v1h-3zM470 462h2v1h-2zM472 461h3v1h-3zM475 460h2v1h-2zM477 459h2v1h-2zM479 458h3v1h-3zM482 457h2v1h-2zM484 456h2v1h-2zM486 455h3v1h-3zM489 454h2v1h-2zM491 453h3v1h-3zM494 452h2v1h-2zM496 451h2v1h-2zM498 450h3v1h-3zM501 449h2v1h-2zM503 448h2v1h-2zM505 447h2v1h-2zM507 446h3v1h-3zM510 445h2v1h-2zM512 444h2v1h-2zM514 443h3v1h-3zM517 442h2v1h-2zM519 441h2v1h-2zM521 440h2v1h-2zM523 439h3v1h-3zM526 438h2v1h-2zM528 437h2v1h-2zM530 436h3v1h-3zM533 435h2v1h-2zM535 434h2v1h-2zM537 433h3v1h-3zM540 432h2v1h-2zM542 431h2v1h-2zM544 430h3v1h-3zM547 429h2v1h-2zM549 428h3v1h-3zM552 427h2v1h-2zM554 426h2v1h-2zM556 425h4v1h-4zM560 424h3v1h-3zM563 423h3v1h-3zM566 422h3v1h-3zM569 421h8v1h-8zM577 420h19v1h-19zM596 421h7v1h-7zM603 420h4v1h-4zM607 419h4v1h-4zM611 418h4v1h-4zM615 417h4v1h-4zM619 416h3v1h-3zM622 415h3v1h-3zM625 414h2v1h-2zM627 413h3v1h-3zM630 412h2v1h-2zM632 411h3v1h-3zM635 410h2v1h-2zM637 409h3v1h-3zM640 408h2v1h-2zM642 407h2v1h-2zM644 406h2v1h-2zM646 405h2v1h-2zM648 404h2v1h-2zM650 403h2v1h-2zM652 402h2v1h-2zM654 401h3v1h-3zM657 400h2v1h-2zM659 399h2v1h-2zM661 398h2v1h-2zM663 397h1v1h-1zM664 396h1v1h-1zM665 395h1v1h-1zM666 394h1v1h-1zM667 393h1v1h-1zM668 392h1v1h-1zM669 391h1v1h-1zM670 390h1v1h-1zM671 389h2v1h-2zM673 388h1v1h-1zM674 387h1v1h-1zM675 386h1v1h-1zM676 385h1v1h-1zM677 384h1v1h-1zM678 383h1v1h-1zM679 382h1v1h-1zM680 381h2v1h-2zM682 380h1v1h-1zM683 379h1v1h-1zM684 378h1v1h-1zM685 377h1v1h-1zM686 376h1v1h-1zM687 375h1v1h-1zM688 374h1v1h-1zM689 373h1v1h-1zM690 372h1v1h-1zM691 370h1v2h-1zM691 370h1v1h-1zM692 369h1v1h-1zM693 368h1v1h-1zM694 367h1v1h-1zM695 366h1v1h-1zM696 364h1v2h-1zM696 364h1v1h-1zM697 363h1v1h-1zM698 362h1v1h-1zM699 361h1v1h-1zM700 360h1v1h-1zM701 359h1v1h-1zM702 358h1v1h-1zM703 357h1v1h-1zM704 356h1v1h-1zM705 355h1v1h-1zM706 354h1v1h-1zM707 353h1v1h-1zM708 352h1v1h-1zM709 351h1v1h-1zM710 349h1v2h-1zM710 349h1v1h-1zM711 348h1v1h-1zM712 347h1v1h-1zM713 346h2v1h-2zM715 345h1v1h-1zM716 344h1v1h-1zM717 343h1v1h-1zM718 342h1v1h-1zM719 341h1v1h-1zM720 339h1v2h-1zM720 339h1v1h-1zM721 337h1v2h-1zM721 337h1v1h-1zM722 336h1v1h-1zM723 334h1v2h-1zM723 334h1v1h-1zM724 332h1v2h-1zM724 332h1v1h-1zM725 331h1v1h-1zM726 329h1v2h-1zM726 329h1v1h-1zM727 328h2v1h-2zM729 327h1v1h-1zM730 326h2v1h-2zM732 325h1v1h-1zM733 324h2v1h-2zM735 323h1v1h-1zM736 322h1v1h-1zM737 321h1v1h-1zM738 320h1v1h-1zM739 319h1v1h-1zM740 318h2v1h-2zM742 317h1v1h-1zM743 316h1v1h-1zM744 315h1v1h-1zM745 314h8v1h-8zM753 315h4v1h-4zM757 316h2v1h-2zM759 317h2v1h-2zM761 318h2v1h-2zM763 319h2v1h-2zM765 320h1v1h-1zM766 321h1v1h-1zM767 322h1v1h-1zM768 323h1v1h-1zM769 324h1v1h-1zM770 325h1v1h-1zM771 326h1v1h-1zM772 327h1v1h-1zM773 328h2v1h-2zM775 329h1v1h-1zM776 330h2v1h-2zM778 331h1v1h-1zM779 332h2v1h-2zM781 333h1v1h-1zM782 334h1v1h-1zM783 335h1v1h-1zM784 336h1v2h-1zM785 338h1v1h-1zM785 338h1v1h-1zM786 339h1v2h-1zM787 341h1v1h-1zM787 341h1v1h-1zM788 342h1v2h-1zM789 344h1v1h-1zM789 344h1v1h-1zM790 345h1v1h-1zM791 346h1v1h-1zM792 347h1v1h-1zM793 348h1v1h-1zM794 349h1v1h-1zM795 350h1v1h-1zM796 351h1v1h-1zM797 352h1v1h-1zM798 353h2v1h-2zM800 354h2v1h-2zM802 355h2v1h-2zM804 356h2v1h-2zM806 357h2v1h-2zM808 358h2v1h-2zM810 359h1v1h-1zM811 360h3v1h-3zM814 361h4v1h-4zM818 362h3v1h-3zM821 363h3v1h-3zM824 364h7v1h-7zM831 365h24v1h-24zM855 364h6v1h-6zM861 363h10v1h-10zM871 362h2v1h-2zM873 361h2v1h-2zM875 360h2v1h-2zM877 359h2v1h-2zM879 358h2v1h-2zM881 357h2v1h-2zM883 356h1v1h-1zM884 355h2v1h-2zM886 354h2v1h-2zM888 353h2v1h-2zM890 352h1v1h-1zM891 351h2v1h-2zM893 350h1v1h-1zM894 349h1v1h-1zM895 348h2v1h-2zM897 347h1v1h-1zM898 346h2v1h-2zM900 345h1v1h-1zM901 344h2v1h-2zM903 343h1v1h-1zM904 342h2v1h-2zM906 341h2v1h-2zM908 340h2v1h-2zM910 339h11v1h-11zM921 340h2v1h-2zM923 341h2v1h-2zM925 342h2v1h-2zM927 343h3v1h-3zM930 344h6v1h-6zM936 345h4v1h-4zM940 346h2v1h-2zM942 347h2v1h-2zM944 348h2v1h-2zM946 349h1v1h-1zM947 350h3v1h-3zM950 351h2v1h-2zM952 352h2v1h-2zM954 353h2v1h-2zM956 354h9v1h-9zM965 353h3v1h-3zM968 352h3v1h-3zM971 351h3v1h-3zM974 350h3v1h-3zM977 349h3v1h-3zM980 348h7v1h-7zM987 347h4v1h-4zM991 346h2v1h-2zM993 345h2v1h-2zM995 344h1v1h-1zM996 343h2v1h-2zM998 342h2v1h-2zM1000 341h2v1h-2zM1002 340h1v1h-1zM1003 339h2v1h-2zM1005 338h2v1h-2zM1007 337h1v1h-1zM1008 336h2v1h-2zM1010 335h2v1h-2zM1012 334h3v1h-3zM1015 333h3v1h-3zM1018 332h3v1h-3zM1021 331h9v1h-9zM1030 330h7v1h-7zM1037 329h8v1h-8zM1045 328h4v1h-4zM1049 329h7v1h-7zM1056 330h7v1h-7zM1063 331h7v1h-7zM1070 330h7v1h-7zM1077 329h7v1h-7zM1084 328h10v1h-10zM1094 327h2v1h-2zM1096 326h3v1h-3zM1099 325h3v1h-3zM1102 324h2v1h-2zM1104 323h3v1h-3zM1107 322h2v1h-2zM1109 321h3v1h-3zM1112 320h2v1h-2zM1114 319h3v1h-3zM1117 318h3v1h-3zM1120 317h2v1h-2zM1122 316h3v1h-3zM1125 315h2v1h-2zM1127 314h3v1h-3zM1130 313h11v1h-11zM1141 312h8v1h-8zM1149 311h1v1h-1zM1150 310h1v1h-1zM1151 309h1v1h-1zM1152 308h2v1h-2zM1154 305h1v1h-1zM1155 303h1v2h-1zM1155 303h1v1h-1zM1156 301h1v2h-1zM1156 300h1v2h-1zM1157 298h1v2h-1zM1157 298h1v1h-1zM1158 296h1v2h-1zM1158 295h1v2h-1zM1159 293h1v2h-1zM1159 292h1v2h-1zM1160 290h1v2h-1zM1160 289h1v2h-1zM1161 286h1v3h-1zM1161 285h1v2h-1zM1162 283h1v2h-1zM1162 282h1v2h-1zM1163 280h1v2h-1zM1163 279h1v2h-1zM1164 276h1v3h-1zM1164 275h1v2h-1zM1165 273h1v2h-1zM1165 272h1v2h-1zM1166 269h1v3h-1zM1166 268h1v2h-1zM1167 266h1v2h-1zM1167 265h1v2h-1zM1168 262h1v3h-1zM1168 262h1v1h-1zM1169 260h1v2h-1zM1169 260h1v1h-1zM1170 259h1v1h-1zM1171 257h1v2h-1zM1171 257h1v1h-1zM1172 255h1v2h-1zM1172 255h1v1h-1zM1173 254h1v1h-1zM1174 252h1v2h-1zM1174 252h1v1h-1zM1175 250h1v2h-1zM1175 250h1v1h-1zM1176 249h1v1h-1zM1177 247h1v2h-1zM1177 247h1v1h-1zM1178 246h1v1h-1zM1179 245h1v1h-1zM1180 244h1v1h-1zM1181 243h1v1h-1zM1182 242h1v1h-1zM1183 241h1v1h-1zM1184 239h1v2h-1zM1184 239h1v1h-1zM1185 238h2v1h-2zM1187 237h2v1h-2zM1189 236h2v1h-2zM1191 235h3v1h-3zM1194 234h1v1h-1zM1195 235h1v1h-1zM1196 236h1v1h-1zM1197 237h1v2h-1zM1198 239h1v1h-1zM1198 239h1v1h-1zM1199 240h1v2h-1zM1200 242h1v1h-1zM1200 242h1v1h-1zM1201 243h1v1h-1zM1202 244h1v2h-1zM1203 246h1v1h-1zM1203 246h1v1h-1zM1204 247h1v2h-1zM1205 249h1v2h-1zM1205 250h1v3h-1zM1206 253h1v2h-1zM1206 254h1v2h-1zM1207 256h1v2h-1zM1207 257h1v2h-1zM1208 259h1v2h-1zM1208 260h1v2h-1zM1209 262h1v2h-1zM1209 263h1v3h-1zM1210 266h1v2h-1zM1210 267h1v2h-1zM1211 269h1v2h-1zM1211 270h1v3h-1zM1212 273h1v2h-1zM1212 274h1v2h-1zM1213 276h1v2h-1zM1213 277h1v1h-1zM1214 278h1v2h-1zM1215 280h1v1h-1zM1215 280h1v1h-1zM1216 281h1v1h-1zM1217 282h1v2h-1zM1218 284h1v1h-1zM1218 284h1v1h-1zM1219 285h1v1h-1zM1220 286h1v2h-1zM1221 288h1v1h-1zM1221 288h1v1h-1zM1222 289h1v1h-1zM1223 290h2v1h-2zM1225 291h1v1h-1zM1226 292h2v1h-2zM1228 293h1v1h-1zM1229 294h1v1h-1zM1230 295h2v1h-2zM1232 296h2v1h-2zM1234 297h3v1h-3zM1237 298h2v1h-2zM1239 299h5v1h-5zM1244 300h8v1h-8zM1252 299h3v1h-3zM1255 298h4v1h-4zM1259 297h1v1h-1zM1260 296h2v1h-2zM1262 295h2v1h-2zM1264 294h3v1h-3zM1267 293h2v1h-2zM1269 292h3v1h-3zM1272 291h2v1h-2zM1274 290h2v1h-2zM1276 289h2v1h-2zM1278 288h3v1h-3zM1281 287h1v1h-1zM1282 286h2v1h-2zM1284 285h1v1h-1zM1285 284h2v1h-2zM1287 283h1v1h-1zM1288 282h2v1h-2zM1290 281h1v1h-1zM1291 280h2v1h-2zM1293 279h2v1h-2zM1295 278h2v1h-2zM1297 277h3v1h-3zM1300 276h3v1h-3zM1303 275h4v1h-4zM1307 274h6v1h-6zM1313 273h3v1h-3zM1316 272h1v1h-1zM1317 271h1v1h-1zM1318 270h1v1h-1zM1319 269h1v1h-1zM1320 267h1v2h-1zM1320 267h1v1h-1zM1321 266h1v1h-1zM1322 264h1v2h-1zM1322 264h1v1h-1zM1323 262h1v2h-1zM1324 260h1v2h-1zM1324 260h1v1h-1zM1325 258h1v2h-1zM1325 257h1v2h-1zM1326 255h1v2h-1zM1326 254h1v2h-1zM1327 251h1v3h-1zM1327 250h1v2h-1zM1328 247h1v3h-1zM1328 246h1v2h-1zM1329 244h1v2h-1zM1329 243h1v2h-1zM1330 241h1v2h-1zM1330 241h1v1h-1zM1331 239h1v2h-1zM1331 238h1v2h-1zM1332 236h1v2h-1zM1332 236h1v1h-1zM1333 235h1v1h-1zM1334 233h1v2h-1zM1334 233h1v1h-1zM1335 232h1v1h-1zM1336 230h1v2h-1zM1336 230h1v1h-1zM1337 229h1v1h-1zM1338 227h1v2h-1zM1338 227h1v1h-1zM1339 226h1v1h-1zM1340 224h1v2h-1zM1340 224h1v1h-1zM1341 223h1v1h-1zM1342 221h1v2h-1zM1342 221h1v1h-1zM1343 220h1v1h-1zM1344 218h1v2h-1zM1344 218h1v1h-1zM1345 217h1v1h-1zM1346 215h1v2h-1zM1346 215h1v1h-1zM1347 214h1v1h-1zM1348 212h1v2h-1zM1348 212h1v1h-1zM1349 211h1v1h-1zM1350 209h1v2h-1zM1350 209h1v1h-1zM1351 208h1v1h-1zM1352 206h1v2h-1zM1352 206h1v1h-1zM1353 205h1v1h-1zM1354 204h1v1h-1zM1355 202h1v2h-1zM1355 202h1v1h-1zM1356 201h1v1h-1zM1357 200h1v1h-1zM1358 198h1v2h-1zM1358 198h1v1h-1zM1359 197h1v1h-1zM1360 195h1v2h-1zM1360 195h3v1h-3zM1363 194h2v1h-2zM1365 193h3v1h-3zM1368 192h2v1h-2z" fill="#ffffff" shape-rendering="crispEdges"/>
<path d="M0 449h6v1h-6zM6 450h5v1h-5zM11 451h5v1h-5zM16 452h4v1h-4zM20 453h4v1h-4zM24 454h4v1h-4zM28 455h3v1h-3zM31 456h4v1h-4zM35 457h3v1h-3zM38 458h2v1h-2zM40 459h1v1h-1zM41 460h2v1h-2zM43 461h2v1h-2zM45 462h2v1h-2zM47 463h4v1h-4zM51 464h6v1h-6zM57 465h8v1h-8zM65 466h9v1h-9zM74 467h16v1h-16zM90 468h30v1h-30zM120 469h49v1h-49zM169 470h22v1h-22zM191 469h10v1h-10zM201 468h11v1h-11zM212 467h14v1h-14zM226 466h28v1h-28zM254 467h11v1h-11zM265 468h10v1h-10zM275 469h12v1h-12zM287 470h13v1h-13zM300 471h1v1h-1zM301 470h26v1h-26zM327 469h12v1h-12zM339 468h53v1h-53zM392 469h21v1h-21zM413 470h40v1h-40zM453 469h7v1h-7zM460 468h5v1h-5zM465 467h5v1h-5zM470 466h5v1h-5zM475 465h5v1h-5zM480 464h5v1h-5zM485 463h3v1h-3zM488 462h2v1h-2zM490 461h3v1h-3zM493 460h3v1h-3zM496 459h3v1h-3zM499 458h2v1h-2zM501 457h3v1h-3zM504 456h3v1h-3zM507 455h3v1h-3zM510 454h3v1h-3zM513 453h2v1h-2zM515 452h2v1h-2zM517 451h3v1h-3zM520 450h2v1h-2zM522 449h2v1h-2zM524 448h3v1h-3zM527 447h2v1h-2zM529 446h3v1h-3zM532 445h2v1h-2zM534 444h2v1h-2zM536 443h3v1h-3zM539 442h2v1h-2zM541 441h2v1h-2zM543 440h3v1h-3zM546 439h2v1h-2zM548 438h2v1h-2zM550 437h2v1h-2zM552 436h2v1h-2zM554 435h3v1h-3zM557 434h2v1h-2zM559 433h2v1h-2zM561 432h2v1h-2zM563 431h3v1h-3zM566 430h2v1h-2zM568 429h2v1h-2zM570 428h4v1h-4zM574 427h4v1h-4zM578 426h4v1h-4zM582 425h6v1h-6zM588 424h7v1h-7zM595 423h6v1h-6zM601 422h4v1h-4zM605 421h4v1h-4zM609 420h4v1h-4zM613 419h5v1h-5zM618 418h4v1h-4zM622 417h4v1h-4zM626 416h5v1h-5zM631 415h5v1h-5zM636 414h5v1h-5zM641 413h3v1h-3zM644 412h4v1h-4zM648 411h3v1h-3zM651 410h3v1h-3zM654 409h3v1h-3zM657 408h3v1h-3zM660 407h2v1h-2zM662 406h2v1h-2zM664 405h2v1h-2zM666 404h1v1h-1zM667 403h2v1h-2zM669 402h1v1h-1zM670 401h2v1h-2zM672 400h2v1h-2zM674 399h1v1h-1zM675 398h2v1h-2zM677 397h2v1h-2zM679 396h1v1h-1zM680 395h2v1h-2zM682 394h2v1h-2zM684 393h1v1h-1zM685 392h1v1h-1zM686 391h1v1h-1zM687 390h1v1h-1zM688 389h1v1h-1zM689 388h1v1h-1zM690 387h1v1h-1zM691 386h2v1h-2zM693 385h1v1h-1zM694 384h1v1h-1zM695 383h1v1h-1zM696 382h1v1h-1zM697 381h1v1h-1zM698 380h1v1h-1zM699 379h1v1h-1zM700 378h2v1h-2zM702 377h1v1h-1zM703 376h2v1h-2zM705 375h1v1h-1zM706 374h1v1h-1zM707 373h2v1h-2zM709 372h1v1h-1zM710 371h1v1h-1zM711 370h2v1h-2zM713 369h1v1h-1zM714 368h2v1h-2zM716 367h1v1h-1zM717 366h1v1h-1zM718 365h1v1h-1zM719 364h1v1h-1zM720 363h1v1h-1zM721 362h1v1h-1zM722 360h1v2h-1zM722 360h1v1h-1zM723 359h1v1h-1zM724 358h1v1h-1zM725 357h1v1h-1zM726 356h1v1h-1zM727 355h1v1h-1zM728 354h1v1h-1zM729 353h1v1h-1zM730 352h1v1h-1zM731 351h1v1h-1zM732 350h1v1h-1zM733 349h2v1h-2zM735 348h1v1h-1zM736 347h1v1h-1zM737 346h1v1h-1zM738 345h1v1h-1zM739 344h1v1h-1zM740 343h1v1h-1zM741 342h1v1h-1zM742 341h1v1h-1zM743 340h1v1h-1zM744 339h1v1h-1zM745 338h1v1h-1zM746 337h1v1h-1zM747 336h1v1h-1zM748 335h2v1h-2zM750 334h2v1h-2zM752 333h2v1h-2zM754 332h1v1h-1zM755 331h5v1h-5zM760 330h4v1h-4zM764 329h4v1h-4zM768 328h17v1h-17zM785 329h4v1h-4zM789 330h3v1h-3zM792 331h4v1h-4zM796 332h2v1h-2zM798 333h2v1h-2zM800 334h2v1h-2zM802 335h2v1h-2zM804 336h2v1h-2zM806 337h2v1h-2zM808 338h2v1h-2zM810 339h2v1h-2zM812 340h2v1h-2zM814 341h1v1h-1zM815 342h2v1h-2zM817 343h2v1h-2zM819 344h1v1h-1zM820 345h2v1h-2zM822 346h2v1h-2zM824 347h2v1h-2zM826 348h1v1h-1zM827 349h2v1h-2zM829 350h2v1h-2zM831 351h1v1h-1zM832 352h2v1h-2zM834 353h1v1h-1zM835 354h2v1h-2zM837 355h2v1h-2zM839 356h1v1h-1zM840 357h2v1h-2zM842 358h3v1h-3zM845 359h2v1h-2zM847 360h2v1h-2zM849 361h3v1h-3zM852 362h5v1h-5zM857 363h6v1h-6zM863 364h13v1h-13zM876 363h2v1h-2zM878 362h3v1h-3zM881 361h3v1h-3zM884 360h3v1h-3zM887 359h2v1h-2zM889 358h3v1h-3zM892 357h2v1h-2zM894 356h3v1h-3zM897 355h2v1h-2zM899 354h4v1h-4zM903 353h5v1h-5zM908 352h5v1h-5zM913 351h19v1h-19zM932 350h2v1h-2zM934 349h3v1h-3zM937 348h3v1h-3zM940 347h63v1h-63zM1003 346h3v1h-3zM1006 345h3v1h-3zM1009 344h3v1h-3zM1012 343h3v1h-3zM1015 342h3v1h-3zM1018 341h3v1h-3zM1021 340h5v1h-5zM1026 339h6v1h-6zM1032 338h5v1h-5zM1037 337h5v1h-5zM1042 336h3v1h-3zM1045 335h4v1h-4zM1049 334h3v1h-3zM1052 333h4v1h-4zM1056 332h9v1h-9zM1065 331h10v1h-10zM1075 330h8v1h-8zM1083 329h8v1h-8zM1091 328h7v1h-7zM1098 327h7v1h-7zM1105 326h6v1h-6zM1111 325h7v1h-7zM1118 324h5v1h-5zM1123 323h5v1h-5zM1128 322h5v1h-5zM1133 321h5v1h-5zM1138 320h5v1h-5zM1143 319h5v1h-5zM1148 318h1v1h-1zM1149 317h1v1h-1zM1150 316h1v1h-1zM1151 315h1v1h-1zM1152 314h1v1h-1zM1153 313h1v1h-1zM1154 312h1v1h-1zM1155 311h1v1h-1zM1156 310h1v1h-1zM1157 309h1v1h-1zM1158 308h1v1h-1zM1159 306h1v2h-1zM1159 306h1v1h-1zM1160 304h1v2h-1zM1160 304h1v1h-1zM1161 302h1v2h-1zM1161 302h1v1h-1zM1162 300h1v2h-1zM1162 300h1v1h-1zM1163 298h1v2h-1zM1163 298h1v1h-1zM1164 296h1v2h-1zM1164 296h1v1h-1zM1165 294h1v2h-1zM1165 294h1v1h-1zM1166 292h1v2h-1zM1166 292h1v1h-1zM1167 291h1v1h-1zM1168 290h1v1h-1zM1169 289h1v1h-1zM1170 288h1v1h-1zM1171 286h1v2h-1zM1171 286h1v1h-1zM1172 285h1v1h-1zM1173 284h1v1h-1zM1174 283h1v1h-1zM1175 282h1v1h-1zM1176 281h2v1h-2zM1178 280h2v1h-2zM1180 279h3v1h-3zM1183 278h2v1h-2zM1185 277h2v1h-2zM1187 276h3v1h-3zM1190 275h2v1h-2zM1192 274h3v1h-3zM1195 273h4v1h-4zM1199 272h6v1h-6zM1205 271h13v1h-13zM1218 270h4v1h-4zM1222 269h4v1h-4zM1226 268h4v1h-4zM1230 267h12v1h-12zM1242 268h2v1h-2zM1244 269h1v1h-1zM1245 270h2v1h-2zM1247 271h1v1h-1zM1248 272h2v1h-2zM1250 273h1v1h-1zM1251 274h1v2h-1zM1252 276h1v1h-1zM1252 276h1v1h-1zM1253 277h1v1h-1zM1254 278h1v2h-1zM1255 280h1v1h-1zM1255 280h1v1h-1zM1256 281h1v2h-1zM1257 283h1v1h-1zM1257 283h1v1h-1zM1258 284h1v1h-1zM1259 285h1v1h-1zM1260 286h1v1h-1zM1261 287h1v2h-1zM1262 289h1v1h-1zM1262 289h2v1h-2zM1264 290h2v1h-2zM1266 291h1v1h-1zM1267 292h22v1h-22zM1289 291h3v1h-3zM1292 290h2v1h-2zM1294 289h3v1h-3zM1297 288h3v1h-3zM1300 287h3v1h-3zM1303 286h2v1h-2zM1305 285h3v1h-3zM1308 284h3v1h-3zM1311 283h2v1h-2zM1313 282h2v1h-2zM1315 281h1v1h-1zM1316 280h2v1h-2zM1318 279h1v1h-1zM1319 278h2v1h-2zM1321 277h1v1h-1zM1322 276h1v1h-1zM1323 275h1v1h-1zM1324 273h1v2h-1zM1324 273h1v1h-1zM1325 272h1v1h-1zM1326 270h1v2h-1zM1326 270h1v1h-1zM1327 268h1v2h-1zM1327 268h1v1h-1zM1328 266h1v2h-1zM1328 266h1v1h-1zM1329 265h1v1h-1zM1330 263h1v2h-1zM1330 263h1v1h-1zM1331 261h1v2h-1zM1331 261h1v1h-1zM1332 260h1v1h-1zM1333 259h1v1h-1zM1334 258h1v1h-1zM1335 257h1v1h-1zM1336 256h1v1h-1zM1337 255h1v1h-1zM1338 254h1v1h-1zM1339 253h1v1h-1zM1340 252h1v1h-1zM1341 251h1v1h-1zM1342 250h1v1h-1zM1343 249h1v1h-1zM1344 248h1v1h-1zM1345 247h1v1h-1zM1346 246h2v1h-2zM1348 245h1v1h-1zM1349 244h1v1h-1zM1350 243h1v1h-1zM1351 242h2v1h-2zM1353 241h1v1h-1zM1354 240h1v1h-1zM1355 239h1v1h-1zM1356 238h1v1h-1zM1357 237h2v1h-2zM1359 236h1v1h-1zM1360 235h1v1h-1zM1361 234h1v1h-1zM1362 233h1v1h-1zM1363 232h2v1h-2zM1365 231h1v1h-1zM1366 230h1v1h-1zM1367 229h1v1h-1zM1368 228h2v1h-2z" fill="#ffff00" shape-rendering="crispEdges"/>
<path d="M0 419h1v1h-1zM1 420h1v1h-1zM2 421h1v1h-1zM3 422h1v1h-1zM4 423h1v1h-1zM5 424h1v1h-1zM6 425h1v1h-1zM7 426h1v1h-1zM8 427h1v1h-1zM9 428h1v2h-1zM10 430h1v1h-1zM10 430h2v1h-2zM12 431h1v1h-1zM13 432h2v1h-2zM15 433h1v1h-1zM16 434h2v1h-2zM18 435h1v1h-1zM19 436h2v1h-2zM21 437h1v1h-1zM22 438h3v1h-3zM25 439h3v1h-3zM28 440h3v1h-3zM31 441h2v1h-2zM33 442h3v1h-3zM36 443h3v1h-3zM39 444h3v1h-3zM42 445h2v1h-2zM44 446h3v1h-3zM47 447h3v1h-3zM50 448h3v1h-3zM53 449h3v1h-3zM56 450h3v1h-3zM59 451h3v1h-3zM62 452h3v1h-3zM65 453h3v1h-3zM68 454h3v1h-3zM71 455h3v1h-3zM74 456h6v1h-6zM80 457h12v1h-12zM92 458h10v1h-10zM102 459h5v1h-5zM107 460h5v1h-5zM112 461h5v1h-5zM117 462h5v1h-5zM122 463h4v1h-4zM126 464h5v1h-5zM131 465h4v1h-4zM135 466h10v1h-10zM145 467h28v1h-28zM173 468h41v1h-41zM214 467h20v1h-20zM234 466h14v1h-14zM248 467h22v1h-22zM270 468h20v1h-20zM290 469h125v1h-125zM415 470h23v1h-23zM438 469h16v1h-16zM454 468h10v1h-10zM464 467h9v1h-9zM473 466h10v1h-10zM483 465h9v1h-9zM492 464h9v1h-9zM501 463h5v1h-5zM506 462h4v1h-4zM510 461h5v1h-5zM515 460h5v1h-5zM520 459h4v1h-4zM524 458h5v1h-5zM529 457h3v1h-3zM532 456h3v1h-3zM535 455h4v1h-4zM539 454h3v1h-3zM542 453h3v1h-3zM545 452h4v1h-4zM549 451h3v1h-3zM552 450h3v1h-3zM555 449h4v1h-4zM559 448h4v1h-4zM563 447h4v1h-4zM567 446h4v1h-4zM571 445h4v1h-4zM575 444h4v1h-4zM579 443h4v1h-4zM583 442h3v1h-3zM586 441h4v1h-4zM590 440h4v1h-4zM594 439h3v1h-3zM597 438h4v1h-4zM601 437h4v1h-4zM605 436h3v1h-3zM608 435h4v1h-4zM612 434h3v1h-3zM615 433h3v1h-3zM618 432h3v1h-3zM621 431h3v1h-3zM624 430h3v1h-3zM627 429h3v1h-3zM630 428h2v1h-2zM632 427h3v1h-3zM635 426h3v1h-3zM638 425h3v1h-3zM641 424h3v1h-3zM644 423h3v1h-3zM647 422h3v1h-3zM650 421h2v1h-2zM652 420h3v1h-3zM655 419h3v1h-3zM658 418h3v1h-3zM661 417h3v1h-3zM664 416h3v1h-3zM667 415h2v1h-2zM669 414h2v1h-2zM671 413h2v1h-2zM673 412h2v1h-2zM675 411h2v1h-2zM677 410h2v1h-2zM679 409h2v1h-2zM681 408h2v1h-2zM683 407h2v1h-2zM685 406h2v1h-2zM687 405h2v1h-2zM689 404h2v1h-2zM691 403h2v1h-2zM693 402h1v1h-1zM694 401h2v1h-2zM696 400h2v1h-2zM698 399h2v1h-2zM700 398h2v1h-2zM702 397h2v1h-2zM704 396h2v1h-2zM706 395h2v1h-2zM708 394h2v1h-2zM710 393h2v1h-2zM712 392h2v1h-2zM714 391h2v1h-2zM716 390h2v1h-2zM718 389h2v1h-2zM720 388h1v1h-1zM721 387h2v1h-2zM723 386h2v1h-2zM725 385h2v1h-2zM727 384h2v1h-2zM729 383h2v1h-2zM731 382h1v1h-1zM732 381h2v1h-2zM734 380h2v1h-2zM736 379h1v1h-1zM737 378h2v1h-2zM739 377h2v1h-2zM741 376h1v1h-1zM742 375h2v1h-2zM744 374h2v1h-2zM746 373h1v1h-1zM747 372h2v1h-2zM749 371h3v1h-3zM752 370h2v1h-2zM754 369h3v1h-3zM757 368h2v1h-2zM759 367h3v1h-3zM762 366h2v1h-2zM764 365h2v1h-2zM766 364h3v1h-3zM769 363h2v1h-2zM771 362h2v1h-2zM773 361h3v1h-3zM776 360h2v1h-2zM778 359h3v1h-3zM781 358h2v1h-2zM783 357h5v1h-5zM788 356h5v1h-5zM793 355h4v1h-4zM797 354h4v1h-4zM801 353h4v1h-4zM805 352h4v1h-4zM809 351h4v1h-4zM813 350h5v1h-5zM818 349h6v1h-6zM824 348h6v1h-6zM830 347h8v1h-8zM838 346h64v1h-64zM902 347h5v1h-5zM907 348h5v1h-5zM912 349h4v1h-4zM916 350h5v1h-5zM921 351h5v1h-5zM926 352h4v1h-4zM930 353h3v1h-3zM933 354h8v1h-8zM941 355h27v1h-27zM968 354h7v1h-7zM975 353h7v1h-7zM982 352h6v1h-6zM988 351h6v1h-6zM994 350h7v1h-7zM1001 349h5v1h-5zM1006 348h5v1h-5zM1011 347h5v1h-5zM1016 346h5v1h-5zM1021 345h5v1h-5zM1026 344h6v1h-6zM1032 343h5v1h-5zM1037 342h7v1h-7zM1044 341h9v1h-9zM1053 340h9v1h-9zM1062 339h18v1h-18zM1080 338h18v1h-18zM1098 337h4v1h-4zM1102 336h4v1h-4zM1106 335h4v1h-4zM1110 334h4v1h-4zM1114 333h4v1h-4zM1118 332h4v1h-4zM1122 331h4v1h-4zM1126 330h4v1h-4zM1130 329h4v1h-4zM1134 328h3v1h-3zM1137 327h4v1h-4zM1141 326h4v1h-4zM1145 325h3v1h-3zM1148 324h2v1h-2zM1150 323h3v1h-3zM1153 322h2v1h-2zM1155 321h3v1h-3zM1158 320h1v1h-1zM1159 319h1v1h-1zM1160 318h1v1h-1zM1161 317h1v1h-1zM1162 316h1v1h-1zM1163 315h1v1h-1zM1164 314h1v1h-1zM1165 313h1v1h-1zM1166 311h1v2h-1zM1166 311h2v1h-2zM1168 310h2v1h-2zM1170 309h2v1h-2zM1172 308h2v1h-2zM1174 307h2v1h-2zM1176 306h2v1h-2zM1178 305h2v1h-2zM1180 304h2v1h-2zM1182 303h3v1h-3zM1185 302h3v1h-3zM1188 301h4v1h-4zM1192 300h6v1h-6zM1198 299h9v1h-9zM1207 298h9v1h-9zM1216 297h5v1h-5zM1221 296h6v1h-6zM1227 295h6v1h-6zM1233 294h4v1h-4zM1237 293h4v1h-4zM1241 292h4v1h-4zM1245 291h5v1h-5zM1250 290h4v1h-4zM1254 289h5v1h-5zM1259 288h4v1h-4zM1263 287h5v1h-5zM1268 286h5v1h-5zM1273 285h5v1h-5zM1278 284h4v1h-4zM1282 283h4v1h-4zM1286 282h4v1h-4zM1290 281h4v1h-4zM1294 280h4v1h-4zM1298 279h4v1h-4zM1302 278h3v1h-3zM1305 277h3v1h-3zM1308 276h3v1h-3zM1311 275h3v1h-3zM1314 274h2v1h-2zM1316 273h3v1h-3zM1319 272h1v1h-1zM1320 271h2v1h-2zM1322 270h2v1h-2zM1324 269h2v1h-2zM1326 268h1v1h-1zM1327 267h2v1h-2zM1329 266h2v1h-2zM1331 265h1v1h-1zM1332 264h3v1h-3zM1335 263h9v1h-9zM1344 264h4v1h-4zM1348 265h3v1h-3zM1351 264h5v1h-5zM1356 263h5v1h-5zM1361 262h3v1h-3zM1364 261h3v1h-3zM1367 260h3v1h-3z" fill="#ff00ff" shape-rendering="crispEdges"/>
<path d="M0 419h26v1h-26zM26 420h5v1h-5zM31 421h8v1h-8zM39 422h14v1h-14zM53 423h6v1h-6zM59 424h6v1h-6zM65 425h6v1h-6zM71 426h5v1h-5zM76 427h2v1h-2zM78 428h2v1h-2zM80 429h2v1h-2zM82 430h2v1h-2zM84 431h2v1h-2zM86 432h2v1h-2zM88 433h1v1h-1zM89 434h2v1h-2zM91 435h1v1h-1zM92 436h2v1h-2zM94 437h1v1h-1zM95 438h2v1h-2zM97 439h2v1h-2zM99 440h2v1h-2zM101 441h2v1h-2zM103 442h2v1h-2zM105 443h2v1h-2zM107 444h2v1h-2zM109 445h2v1h-2zM111 446h2v1h-2zM113 447h2v1h-2zM115 448h2v1h-2zM117 449h2v1h-2zM119 450h5v1h-5zM124 451h5v1h-5zM129 452h5v1h-5zM134 453h5v1h-5zM139 454h5v1h-5zM144 455h6v1h-6zM150 456h5v1h-5zM155 457h5v1h-5zM160 458h5v1h-5zM165 459h5v1h-5zM170 460h5v1h-5zM175 461h5v1h-5zM180 462h12v1h-12zM192 463h11v1h-11zM203 464h14v1h-14zM217 465h18v1h-18zM235 466h18v1h-18zM253 467h17v1h-17zM270 468h30v1h-30zM300 469h157v1h-157zM457 468h13v1h-13zM470 467h13v1h-13zM483 466h13v1h-13zM496 465h13v1h-13zM509 464h12v1h-12zM521 463h6v1h-6zM527 462h7v1h-7zM534 461h6v1h-6zM540 460h6v1h-6zM546 459h6v1h-6zM552 458h6v1h-6zM558 457h6v1h-6zM564 456h5v1h-5zM569 455h5v1h-5zM574 454h6v1h-6zM580 453h5v1h-5zM585 452h6v1h-6zM591 451h5v1h-5zM596 450h5v1h-5zM601 449h4v1h-4zM605 448h3v1h-3zM608 447h4v1h-4zM612 446h4v1h-4zM616 445h4v1h-4zM620 444h3v1h-3zM623 443h4v1h-4zM627 442h4v1h-4zM631 441h4v1h-4zM635 440h3v1h-3zM638 439h4v1h-4zM642 438h3v1h-3zM645 437h4v1h-4zM649 436h3v1h-3zM652 435h3v1h-3zM655 434h3v1h-3zM658 433h4v1h-4zM662 432h3v1h-3zM665 431h3v1h-3zM668 430h3v1h-3zM671 429h3v1h-3zM674 428h3v1h-3zM677 427h2v1h-2zM679 426h3v1h-3zM682 425h3v1h-3zM685 424h2v1h-2zM687 423h3v1h-3zM690 422h3v1h-3zM693 421h2v1h-2zM695 420h2v1h-2zM697 419h2v1h-2zM699 418h2v1h-2zM701 417h2v1h-2zM703 416h2v1h-2zM705 415h1v1h-1zM706 414h2v1h-2zM708 413h2v1h-2zM710 412h1v1h-1zM711 411h2v1h-2zM713 410h2v1h-2zM715 409h2v1h-2zM717 408h1v1h-1zM718 407h2v1h-2zM720 406h2v1h-2zM722 405h2v1h-2zM724 404h1v1h-1zM725 403h2v1h-2zM727 402h2v1h-2zM729 401h2v1h-2zM731 400h2v1h-2zM733 399h2v1h-2zM735 398h2v1h-2zM737 397h2v1h-2zM739 396h2v1h-2zM741 395h2v1h-2zM743 394h2v1h-2zM745 393h2v1h-2zM747 392h3v1h-3zM750 391h2v1h-2zM752 390h2v1h-2zM754 389h3v1h-3zM757 388h2v1h-2zM759 387h2v1h-2zM761 386h2v1h-2zM763 385h3v1h-3zM766 384h2v1h-2zM768 383h2v1h-2zM770 382h3v1h-3zM773 381h4v1h-4zM777 380h4v1h-4zM781 379h4v1h-4zM785 378h3v1h-3zM788 377h4v1h-4zM792 376h5v1h-5zM797 375h5v1h-5zM802 374h5v1h-5zM807 373h5v1h-5zM812 372h5v1h-5zM817 371h5v1h-5zM822 370h5v1h-5zM827 369h5v1h-5zM832 368h5v1h-5zM837 367h6v1h-6zM843 366h5v1h-5zM848 365h5v1h-5zM853 364h5v1h-5zM858 363h5v1h-5zM863 362h4v1h-4zM867 361h4v1h-4zM871 360h3v1h-3zM874 359h4v1h-4zM878 358h3v1h-3zM881 357h4v1h-4zM885 356h4v1h-4zM889 355h5v1h-5zM894 354h5v1h-5zM899 353h4v1h-4zM903 352h6v1h-6zM909 351h7v1h-7zM916 350h7v1h-7zM923 349h7v1h-7zM930 348h121v1h-121zM1051 347h10v1h-10zM1061 346h7v1h-7zM1068 345h7v1h-7zM1075 344h6v1h-6zM1081 343h8v1h-8zM1089 342h9v1h-9zM1098 341h6v1h-6zM1104 340h6v1h-6zM1110 339h5v1h-5zM1115 338h6v1h-6zM1121 337h5v1h-5zM1126 336h5v1h-5zM1131 335h5v1h-5zM1136 334h5v1h-5zM1141 333h5v1h-5zM1146 332h4v1h-4zM1150 331h3v1h-3zM1153 330h2v1h-2zM1155 329h3v1h-3zM1158 328h3v1h-3zM1161 327h1v1h-1zM1162 326h2v1h-2zM1164 325h2v1h-2zM1166 324h1v1h-1zM1167 323h3v1h-3zM1170 322h3v1h-3zM1173 321h4v1h-4zM1177 320h3v1h-3zM1180 319h3v1h-3zM1183 318h3v1h-3zM1186 317h5v1h-5zM1191 316h4v1h-4zM1195 315h5v1h-5zM1200 314h4v1h-4zM1204 313h5v1h-5zM1209 312h4v1h-4zM1213 311h5v1h-5zM1218 310h5v1h-5zM1223 309h4v1h-4zM1227 308h5v1h-5zM1232 307h5v1h-5zM1237 306h6v1h-6zM1243 305h7v1h-7zM1250 304h8v1h-8zM1258 303h5v1h-5zM1263 302h4v1h-4zM1267 301h4v1h-4zM1271 300h4v1h-4zM1275 299h4v1h-4zM1279 298h4v1h-4zM1283 297h4v1h-4zM1287 296h4v1h-4zM1291 295h5v1h-5zM1296 294h5v1h-5zM1301 293h5v1h-5zM1306 292h5v1h-5zM1311 291h4v1h-4zM1315 290h4v1h-4zM1319 289h3v1h-3zM1322 288h2v1h-2zM1324 287h2v1h-2zM1326 286h1v1h-1zM1327 285h2v1h-2zM1329 284h2v1h-2zM1331 283h1v1h-1zM1332 282h2v1h-2zM1334 281h2v1h-2zM1336 280h3v1h-3zM1339 279h2v1h-2zM1341 278h2v1h-2zM1343 277h2v1h-2zM1345 276h2v1h-2zM1347 275h2v1h-2zM1349 274h2v1h-2zM1351 273h2v1h-2zM1353 272h3v1h-3zM1356 271h2v1h-2zM1358 270h2v1h-2zM1360 269h2v1h-2zM1362 268h2v1h-2zM1364 267h2v1h-2zM1366 266h2v1h-2zM1368 265h2v1h-2z" fill="#00e800" shape-rendering="crispEdges"/>
<path d="M0 392h6v1h-6zM6 391h7v1h-7zM13 390h13v1h-13zM26 389h44v1h-44zM70 390h3v1h-3zM73 391h46v1h-46zM119 392h7v1h-7zM126 393h6v1h-6zM132 394h5v1h-5zM137 395h6v1h-6zM143 396h6v1h-6zM149 397h3v1h-3zM152 398h2v1h-2zM154 399h2v1h-2zM156 400h2v1h-2zM158 401h2v1h-2zM160 402h2v1h-2zM162 403h2v1h-2zM164 404h2v1h-2zM166 405h2v1h-2zM168 406h2v1h-2zM170 407h2v1h-2zM172 408h2v1h-2zM174 409h2v1h-2zM176 410h2v1h-2zM178 411h2v1h-2zM180 412h1v1h-1zM181 413h2v1h-2zM183 414h1v1h-1zM184 415h2v1h-2zM186 416h2v1h-2zM188 417h1v1h-1zM189 418h2v1h-2zM191 419h1v1h-1zM192 420h2v1h-2zM194 421h1v1h-1zM195 422h2v1h-2zM197 423h2v1h-2zM199 424h2v1h-2zM201 425h2v1h-2zM203 426h1v1h-1zM204 427h2v1h-2zM206 428h2v1h-2zM208 429h2v1h-2zM210 430h2v1h-2zM212 431h2v1h-2zM214 432h2v1h-2zM216 433h2v1h-2zM218 434h2v1h-2zM220 435h2v1h-2zM222 436h2v1h-2zM224 437h4v1h-4zM228 438h3v1h-3zM231 439h6v1h-6zM237 440h8v1h-8zM245 441h10v1h-10zM255 442h10v1h-10zM265 443h10v1h-10zM275 444h35v1h-35zM310 445h32v1h-32zM342 446h5v1h-5zM347 447h4v1h-4zM351 448h4v1h-4zM355 449h4v1h-4zM359 450h4v1h-4zM363 451h4v1h-4zM367 452h4v1h-4zM371 453h4v1h-4zM375 454h5v1h-5zM380 455h5v1h-5zM385 456h5v1h-5zM390 457h5v1h-5zM395 458h5v1h-5zM400 459h6v1h-6zM406 460h7v1h-7zM413 461h7v1h-7zM420 462h6v1h-6zM426 463h8v1h-8zM434 464h14v1h-14zM448 465h74v1h-74zM522 464h15v1h-15zM537 463h15v1h-15zM552 462h14v1h-14zM566 461h13v1h-13zM579 460h14v1h-14zM593 459h11v1h-11zM604 458h8v1h-8zM612 457h9v1h-9zM621 456h8v1h-8zM629 455h8v1h-8zM637 454h7v1h-7zM644 453h6v1h-6zM650 452h6v1h-6zM656 451h6v1h-6zM662 450h5v1h-5zM667 449h5v1h-5zM672 448h5v1h-5zM677 447h5v1h-5zM682 446h4v1h-4zM686 445h5v1h-5zM691 444h4v1h-4zM695 443h4v1h-4zM699 442h4v1h-4zM703 441h4v1h-4zM707 440h4v1h-4zM711 439h4v1h-4zM715 438h4v1h-4zM719 437h3v1h-3zM722 436h3v1h-3zM725 435h4v1h-4zM729 434h3v1h-3zM732 433h4v1h-4zM736 432h4v1h-4zM740 431h4v1h-4zM744 430h4v1h-4zM748 429h4v1h-4zM752 428h5v1h-5zM757 427h5v1h-5zM762 426h5v1h-5zM767 425h4v1h-4zM771 424h5v1h-5zM776 423h5v1h-5zM781 422h5v1h-5zM786 421h5v1h-5zM791 420h5v1h-5zM796 419h5v1h-5zM801 418h5v1h-5zM806 417h5v1h-5zM811 416h5v1h-5zM816 415h5v1h-5zM821 414h5v1h-5zM826 413h5v1h-5zM831 412h5v1h-5zM836 411h5v1h-5zM841 410h5v1h-5zM846 409h5v1h-5zM851 408h5v1h-5zM856 407h5v1h-5zM861 406h5v1h-5zM866 405h4v1h-4zM870 404h5v1h-5zM875 403h5v1h-5zM880 402h5v1h-5zM885 401h5v1h-5zM890 400h4v1h-4zM894 399h5v1h-5zM899 398h5v1h-5zM904 397h5v1h-5zM909 396h4v1h-4zM913 395h5v1h-5zM918 394h5v1h-5zM923 393h5v1h-5zM928 392h4v1h-4zM932 391h5v1h-5zM937 390h5v1h-5zM942 389h4v1h-4zM946 388h3v1h-3zM949 387h4v1h-4zM953 386h4v1h-4zM957 385h3v1h-3zM960 384h5v1h-5zM965 383h5v1h-5zM970 382h6v1h-6zM976 381h5v1h-5zM981 380h5v1h-5zM986 379h5v1h-5zM991 378h5v1h-5zM996 377h4v1h-4zM1000 376h5v1h-5zM1005 375h4v1h-4zM1009 374h5v1h-5zM1014 373h5v1h-5zM1019 372h5v1h-5zM1024 371h5v1h-5zM1029 370h5v1h-5zM1034 369h5v1h-5zM1039 368h6v1h-6zM1045 367h5v1h-5zM1050 366h4v1h-4zM1054 365h4v1h-4zM1058 364h4v1h-4zM1062 363h4v1h-4zM1066 362h4v1h-4zM1070 361h4v1h-4zM1074 360h4v1h-4zM1078 359h4v1h-4zM1082 358h5v1h-5zM1087 357h4v1h-4zM1091 356h5v1h-5zM1096 355h4v1h-4zM1100 354h4v1h-4zM1104 353h5v1h-5zM1109 352h4v1h-4zM1113 351h5v1h-5zM1118 350h4v1h-4zM1122 349h5v1h-5zM1127 348h6v1h-6zM1133 347h6v1h-6zM1139 346h6v1h-6zM1145 345h5v1h-5zM1150 344h4v1h-4zM1154 343h3v1h-3zM1157 342h3v1h-3zM1160 341h3v1h-3zM1163 340h3v1h-3zM1166 339h3v1h-3zM1169 338h3v1h-3zM1172 337h4v1h-4zM1176 336h3v1h-3zM1179 335h4v1h-4zM1183 334h4v1h-4zM1187 333h5v1h-5zM1192 332h4v1h-4zM1196 331h5v1h-5zM1201 330h6v1h-6zM1207 329h7v1h-7zM1214 328h8v1h-8zM1222 327h9v1h-9zM1231 326h10v1h-10zM1241 325h10v1h-10zM1251 324h9v1h-9zM1260 325h1v1h-1zM1261 324h13v1h-13zM1274 323h11v1h-11zM1285 322h8v1h-8zM1293 321h8v1h-8zM1301 320h7v1h-7zM1308 319h7v1h-7zM1315 318h5v1h-5zM1320 317h4v1h-4zM1324 316h4v1h-4zM1328 315h4v1h-4zM1332 314h3v1h-3zM1335 313h4v1h-4zM1339 312h3v1h-3zM1342 311h3v1h-3zM1345 310h4v1h-4zM1349 309h3v1h-3zM1352 308h3v1h-3zM1355 307h4v1h-4zM1359 306h3v1h-3zM1362 305h4v1h-4zM1366 304h4v1h-4z" fill="#c0c0c0" shape-rendering="crispEdges"/>
<path d="M0 468h7v1h-7zM7 467h12v1h-12zM19 466h11v1h-11zM30 465h11v1h-11zM41 464h11v1h-11zM52 463h11v1h-11zM63 462h6v1h-6zM69 461h7v1h-7zM76 460h7v1h-7zM83 459h13v1h-13zM96 458h20v1h-20zM116 457h8v1h-8zM124 456h8v1h-8zM132 455h8v1h-8zM140 454h12v1h-12zM152 453h15v1h-15zM167 452h15v1h-15zM182 451h13v1h-13zM195 450h12v1h-12zM207 449h13v1h-13zM220 448h12v1h-12zM232 447h13v1h-13zM245 446h14v1h-14zM259 445h14v1h-14zM273 444h15v1h-15zM288 443h15v1h-15zM303 442h25v1h-25zM328 441h23v1h-23zM351 440h17v1h-17zM368 439h18v1h-18zM386 438h18v1h-18zM404 437h15v1h-15zM419 436h15v1h-15zM434 435h14v1h-14zM448 434h14v1h-14zM462 433h14v1h-14zM476 432h14v1h-14zM490 431h13v1h-13zM503 430h12v1h-12zM515 429h15v1h-15zM530 428h17v1h-17zM547 427h14v1h-14zM561 426h10v1h-10zM571 425h12v1h-12zM583 424h14v1h-14zM597 423h45v1h-45zM642 422h16v1h-16zM658 421h16v1h-16zM674 420h24v1h-24zM698 421h15v1h-15zM713 422h7v1h-7zM720 423h6v1h-6zM726 424h7v1h-7zM733 425h8v1h-8zM741 426h9v1h-9zM750 427h9v1h-9zM759 428h11v1h-11zM770 429h33v1h-33zM803 428h20v1h-20zM823 427h21v1h-21zM844 426h15v1h-15zM859 425h12v1h-12zM871 424h23v1h-23zM894 423h46v1h-46zM940 424h15v1h-15zM955 423h20v1h-20zM975 422h13v1h-13zM988 421h12v1h-12zM1000 420h10v1h-10zM1010 419h10v1h-10zM1020 418h10v1h-10zM1030 417h10v1h-10zM1040 416h10v1h-10zM1050 415h10v1h-10zM1060 414h9v1h-9zM1069 413h9v1h-9zM1078 412h9v1h-9zM1087 411h9v1h-9zM1096 410h9v1h-9zM1105 409h9v1h-9zM1114 408h9v1h-9zM1123 407h8v1h-8zM1131 406h7v1h-7zM1138 405h6v1h-6zM1144 404h7v1h-7zM1151 403h7v1h-7zM1158 402h5v1h-5zM1163 401h5v1h-5zM1168 400h5v1h-5zM1173 399h5v1h-5zM1178 398h5v1h-5zM1183 397h5v1h-5zM1188 396h5v1h-5zM1193 395h7v1h-7zM1200 394h7v1h-7zM1207 393h6v1h-6zM1213 392h7v1h-7zM1220 391h6v1h-6zM1226 390h6v1h-6zM1232 389h6v1h-6zM1238 388h6v1h-6zM1244 387h6v1h-6zM1250 386h6v1h-6zM1256 385h5v1h-5zM1261 384h5v1h-5zM1266 383h6v1h-6zM1272 382h5v1h-5zM1277 381h6v1h-6zM1283 380h5v1h-5zM1288 379h5v1h-5zM1293 378h5v1h-5zM1298 377h6v1h-6zM1304 376h5v1h-5zM1309 375h5v1h-5zM1314 374h5v1h-5zM1319 373h4v1h-4zM1323 372h4v1h-4zM1327 371h4v1h-4zM1331 370h4v1h-4zM1335 369h4v1h-4zM1339 368h4v1h-4zM1343 367h4v1h-4zM1347 366h3v1h-3zM1350 365h3v1h-3zM1353 364h3v1h-3zM1356 363h3v1h-3zM1359 362h3v1h-3zM1362 361h3v1h-3zM1365 360h3v1h-3zM1368 359h2v1h-2z" fill="#10d8f8" shape-rendering="crispEdges"/>
<path d="M0 522h4v1h-4zM4 521h16v1h-16zM20 520h17v1h-17zM37 519h16v1h-16zM53 518h16v1h-16zM69 517h15v1h-15zM84 516h16v1h-16zM100 515h15v1h-15zM115 514h13v1h-13zM128 513h13v1h-13zM141 512h12v1h-12zM153 511h15v1h-15zM168 510h20v1h-20zM188 509h19v1h-19zM207 508h20v1h-20zM227 507h20v1h-20zM247 506h20v1h-20zM267 505h20v1h-20zM287 504h24v1h-24zM311 503h25v1h-25zM336 502h24v1h-24zM360 501h20v1h-20zM380 500h20v1h-20zM400 499h21v1h-21zM421 498h15v1h-15zM436 497h15v1h-15zM451 496h16v1h-16zM467 495h15v1h-15zM482 494h16v1h-16zM498 493h15v1h-15zM513 492h16v1h-16zM529 491h15v1h-15zM544 490h13v1h-13zM557 489h14v1h-14zM571 488h13v1h-13zM584 487h13v1h-13zM597 486h14v1h-14zM611 485h13v1h-13zM624 484h13v1h-13zM637 483h13v1h-13zM650 482h12v1h-12zM662 481h12v1h-12zM674 480h11v1h-11zM685 479h12v1h-12zM697 478h12v1h-12zM709 477h12v1h-12zM721 476h11v1h-11zM732 475h12v1h-12zM744 474h14v1h-14zM758 473h14v1h-14zM772 472h15v1h-15zM787 471h14v1h-14zM801 470h15v1h-15zM816 469h14v1h-14zM830 468h15v1h-15zM845 467h16v1h-16zM861 466h16v1h-16zM877 465h15v1h-15zM892 464h15v1h-15zM907 463h15v1h-15zM922 462h15v1h-15zM937 461h12v1h-12zM949 460h12v1h-12zM961 459h11v1h-11zM972 458h11v1h-11zM983 457h11v1h-11zM994 456h12v1h-12zM1006 455h11v1h-11zM1017 454h12v1h-12zM1029 453h12v1h-12zM1041 452h11v1h-11zM1052 451h12v1h-12zM1064 450h11v1h-11zM1075 449h10v1h-10zM1085 448h10v1h-10zM1095 447h10v1h-10zM1105 446h10v1h-10zM1115 445h10v1h-10zM1125 444h9v1h-9zM1134 443h6v1h-6zM1140 442h7v1h-7zM1147 441h7v1h-7zM1154 440h6v1h-6zM1160 439h7v1h-7zM1167 438h6v1h-6zM1173 437h7v1h-7zM1180 436h7v1h-7zM1187 435h6v1h-6zM1193 434h8v1h-8zM1201 433h7v1h-7zM1208 432h7v1h-7zM1215 431h8v1h-8zM1223 430h7v1h-7zM1230 429h8v1h-8zM1238 428h7v1h-7zM1245 427h7v1h-7zM1252 426h8v1h-8zM1260 425h7v1h-7zM1267 424h7v1h-7zM1274 423h7v1h-7zM1281 422h8v1h-8zM1289 421h7v1h-7zM1296 420h7v1h-7zM1303 419h7v1h-7zM1310 418h8v1h-8zM1318 417h5v1h-5zM1323 416h5v1h-5zM1328 415h6v1h-6zM1334 414h5v1h-5zM1339 413h6v1h-6zM1345 412h5v1h-5zM1350 411h6v1h-6zM1356 410h5v1h-5zM1361 409h6v1h-6zM1367 408h3v1h-3z" fill="#ffff88" shape-rendering="crispEdges"/>
<g stroke="#f0f0f0" stroke-width="1" fill="none"><path d="M1178.5 69.5H1192M1185 66.3L1178.5 69.5L1185 72.7"/></g>
<text transform="translate(1192.8 72.2) scale(1 1.1)" font-family="Liberation Mono,monospace" font-size="11" letter-spacing="-0.6" fill="#f0f0f0">2.254</text>
<g stroke="#f0f0f0" stroke-width="1" fill="none"><path d="M278.5 478.5H292M285 475.3L278.5 478.5L285 481.7"/></g>
<text transform="translate(293.7 481.3) scale(1 1.1)" font-family="Liberation Mono,monospace" font-size="11" letter-spacing="-0.6" fill="#f0f0f0">1.285</text>
</svg>
<div class="abs" style="left:1442px;top:0;width:8px;height:532px;background:linear-gradient(to bottom,#070707 0,#070707 290px,#2b2b2b 410px,#2b2b2b 532px);border-left:1px solid #3e3e3e;border-right:1px solid #3c3c3c;box-sizing:border-box"></div>
<svg class="abs" style="left:1443px;top:229px" width="6" height="8" viewBox="0 0 6 8" shape-rendering="crispEdges"><path d="M0 0h1v1h-1zM2 0h1v1h-1zM4 0h1v1h-1zM0 7h1v1h-1zM2 7h1v1h-1zM4 7h1v1h-1z" fill="#c8c8c8"/><path d="M0 2h1v4h-1zM2 2h1v4h-1zM4 2h1v4h-1z" fill="#707070"/></svg>
<svg class="abs" style="left:1443px;top:459px" width="6" height="20" viewBox="0 0 6 20"><path d="M1 1L5 10L1 19Z" fill="#c8c8c8"/></svg>
<svg class="abs" style="left:1456px;top:8px" width="8" height="15" viewBox="0 0 8 15"><path d="M8 0L0 7.5L8 15Z" fill="#7a7a7a"/></svg>
<svg class="abs" style="left:1653px;top:8px" width="8" height="15" viewBox="0 0 8 15"><path d="M0 0L8 7.5L0 15Z" fill="#7a7a7a"/></svg>
<div class="abs" style="left:1450px;width:208px;top:-1px;text-align:center;font-size:15.6px;line-height:20px;color:#ece6a8">黄金主题LOF</div>
<div class="abs" style="left:1450px;width:208px;top:21px;text-align:center;font-size:12px;line-height:14px;color:#b4bccc">161116</div>
<div class="abs g" style="left:1450px;width:113px;top:34.2px;text-align:right;font-size:24.5px;line-height:27px;-webkit-text-stroke:0.75px #3be06a">1.940</div>
<div class="abs b g" style="left:1579px;top:35px;font-size:14px;line-height:14px">- 0.025</div>
<div class="abs b g" style="left:1579px;top:49px;font-size:14px;line-height:14px">- 1.27%</div>
<div class="hl" style="left:1450px;top:70px;width:217px"></div>
<div class="rp" style="left:1454px;top:72px;color:#8c8c8c">交易状态</div>
<div class="rp rt" style="left:1556px;width:103px;top:72px;color:#c4c4c4">已收市</div>
<div class="hl" style="left:1450px;top:92px;width:217px"></div>
<div class="vl" style="left:1664px;top:70px;height:45px"></div>
<div class="rp" style="left:1454px;top:94px;color:#8c8c8c">委比</div>
<div class="rp rt b r" style="left:1500px;width:57px;top:94px;font-size:13.6px">2.63%</div>
<div class="rp" style="left:1563px;top:94px;color:#8c8c8c">委差</div>
<div class="rp rt b r" style="left:1599px;width:60px;top:94px;font-size:13.6px">569</div>
<div class="hl" style="left:1450px;top:114px;width:217px"></div>
<div class="abs song" style="left:1453px;width:208px;top:118px;text-align:center;font-size:12px;line-height:16px;color:#f0eca0;font-weight:500;letter-spacing:0.8px"><span style="text-decoration:underline;text-underline-offset:2px">抓住机会，即刻开户！</span></div>
<div class="hl" style="left:1450px;top:137px;width:217px"></div>
<div class="rp" style="left:1454px;top:139px;color:#8c8c8c">卖五</div>
<div class="rp rt b g" style="left:1500px;width:57px;top:139px">1.944</div>
<div class="rp rt b w" style="left:1562px;width:60px;top:139px">590</div>
<div class="rp" style="left:1454px;top:157px;color:#8c8c8c">卖四</div>
<div class="rp rt b g" style="left:1500px;width:57px;top:157px">1.943</div>
<div class="rp rt b w" style="left:1562px;width:60px;top:157px">4278</div>
<div class="rp" style="left:1454px;top:175px;color:#8c8c8c">卖三</div>
<div class="rp rt b g" style="left:1500px;width:57px;top:175px">1.942</div>
<div class="rp rt b w" style="left:1562px;width:60px;top:175px">2087</div>
<div class="rp" style="left:1454px;top:193px;color:#8c8c8c">卖二</div>
<div class="rp rt b g" style="left:1500px;width:57px;top:193px">1.941</div>
<div class="rp rt b w" style="left:1562px;width:60px;top:193px">3454</div>
<div class="rp" style="left:1454px;top:211px;color:#8c8c8c">卖一</div>
<div class="rp rt b g" style="left:1500px;width:57px;top:211px">1.940</div>
<div class="rp rt b w" style="left:1562px;width:60px;top:211px">114</div>
<div class="hl" style="left:1454px;top:232px;width:206px;background:#8a8a8a"></div>
<div class="rp" style="left:1454px;top:233px;color:#8c8c8c">买一</div>
<div class="rp rt b g" style="left:1500px;width:57px;top:233px">1.939</div>
<div class="rp rt b w" style="left:1562px;width:60px;top:233px">7041</div>
<div class="rp" style="left:1454px;top:251px;color:#8c8c8c">买二</div>
<div class="rp rt b g" style="left:1500px;width:57px;top:251px">1.938</div>
<div class="rp rt b w" style="left:1562px;width:60px;top:251px">977</div>
<div class="rp" style="left:1454px;top:269px;color:#8c8c8c">买三</div>
<div class="rp rt b g" style="left:1500px;width:57px;top:269px">1.937</div>
<div class="rp rt b w" style="left:1562px;width:60px;top:269px">1082</div>
<div class="rp" style="left:1454px;top:287px;color:#8c8c8c">买四</div>
<div class="rp rt b g" style="left:1500px;width:57px;top:287px">1.936</div>
<div class="rp rt b w" style="left:1562px;width:60px;top:287px">561</div>
<div class="rp" style="left:1454px;top:305px;color:#8c8c8c">买五</div>
<div class="rp rt b g" style="left:1500px;width:57px;top:305px">1.935</div>
<div class="rp rt b w" style="left:1562px;width:60px;top:305px">1430</div>
<div class="abs" style="left:1450px;top:324px;width:216px;height:26px;background:#1b1b1b;border-top:1px solid #3a3a3a;border-bottom:1px solid #3a3a3a;border-right:1px solid #3a3a3a;box-sizing:border-box"></div>
<div class="rp" style="left:1456px;top:328px;color:#9a9a9a">分时成交</div>
<div class="abs" style="left:1643px;top:329px;width:16px;height:16px;background:#3c3c3c;border-radius:2px;color:#e0e0e0;font-size:13px;line-height:16px;text-align:center">详</div>
<div class="rp rt b" style="left:1440px;width:50px;top:350.5px;color:#c8c8c8">14:55</div>
<div class="rp b g" style="left:1515px;top:350.5px">1.941</div>
<div class="rp rt b r" style="left:1562px;width:60px;top:350.5px">652</div>
<div class="rp rt b w" style="left:1600px;width:57px;top:350.5px">35</div>
<div class="rp rt" style="left:1440px;width:50px;top:370.0px;color:#8c8c8c;font-size:12px">:39</div>
<div class="rp b g" style="left:1515px;top:370.0px">1.940</div>
<svg class="abs" style="left:1552px;top:371.8px" width="9" height="15" viewBox="0 0 9 15"><path d="M3 0H6V9H8.7L4.5 15L0.3 9H3Z" fill="#3be06a"/></svg>
<div class="rp rt b g" style="left:1562px;width:60px;top:370.0px">241</div>
<div class="rp rt b w" style="left:1600px;width:57px;top:370.0px">16</div>
<div class="rp rt" style="left:1440px;width:50px;top:389.5px;color:#8c8c8c;font-size:12px">:42</div>
<div class="rp b g" style="left:1515px;top:389.5px">1.940</div>
<div class="rp rt b g" style="left:1562px;width:60px;top:389.5px">131</div>
<div class="rp rt b w" style="left:1600px;width:57px;top:389.5px">8</div>
<div class="rp rt" style="left:1440px;width:50px;top:409.0px;color:#8c8c8c;font-size:12px">:45</div>
<div class="rp b g" style="left:1515px;top:409.0px">1.941</div>
<svg class="abs" style="left:1552px;top:410.2px" width="9" height="15" viewBox="0 0 9 15"><path d="M3 15H6V6H8.7L4.5 0L0.3 6H3Z" fill="#ff5f5f"/></svg>
<div class="rp rt b r" style="left:1562px;width:60px;top:409.0px">128</div>
<div class="rp rt b w" style="left:1600px;width:57px;top:409.0px">9</div>
<div class="rp rt" style="left:1440px;width:50px;top:428.5px;color:#8c8c8c;font-size:12px">:48</div>
<div class="rp b g" style="left:1515px;top:428.5px">1.940</div>
<svg class="abs" style="left:1552px;top:430.3px" width="9" height="15" viewBox="0 0 9 15"><path d="M3 0H6V9H8.7L4.5 15L0.3 9H3Z" fill="#3be06a"/></svg>
<div class="rp rt b g" style="left:1562px;width:60px;top:428.5px">196</div>
<div class="rp rt b w" style="left:1600px;width:57px;top:428.5px">5</div>
<div class="rp rt" style="left:1440px;width:50px;top:448.0px;color:#8c8c8c;font-size:12px">:51</div>
<div class="rp b g" style="left:1515px;top:448.0px">1.940</div>
<div class="rp rt b g" style="left:1562px;width:60px;top:448.0px">10</div>
<div class="rp rt b w" style="left:1600px;width:57px;top:448.0px">23</div>
<div class="rp rt" style="left:1440px;width:50px;top:467.5px;color:#8c8c8c;font-size:12px">:54</div>
<div class="rp b g" style="left:1515px;top:467.5px">1.940</div>
<div class="rp rt b g" style="left:1562px;width:60px;top:467.5px">91</div>
<div class="rp rt b w" style="left:1600px;width:57px;top:467.5px">7</div>
<div class="rp rt" style="left:1440px;width:50px;top:487.0px;color:#8c8c8c;font-size:12px">:57</div>
<div class="rp b g" style="left:1515px;top:487.0px">1.940</div>
<div class="rp rt b g" style="left:1562px;width:60px;top:487.0px">2108</div>
<div class="rp rt b w" style="left:1600px;width:57px;top:487.0px">35</div>
<div class="rp rt b" style="left:1440px;width:50px;top:506.5px;color:#c8c8c8">14:56</div>
<div class="rp b g" style="left:1515px;top:506.5px">1.940</div>
<div class="rp rt b g" style="left:1562px;width:60px;top:506.5px">1934</div>
<div class="rp rt b w" style="left:1600px;width:57px;top:506.5px">39</div>
<div class="rp rt" style="left:1440px;width:50px;top:526.0px;color:#8c8c8c;font-size:12px">:03</div>
<div class="rp b g" style="left:1515px;top:526.0px">1.939</div>
<svg class="abs" style="left:1552px;top:527.8px" width="9" height="15" viewBox="0 0 9 15"><path d="M3 0H6V9H8.7L4.5 15L0.3 9H3Z" fill="#3be06a"/></svg>
<div class="rp rt b g" style="left:1562px;width:60px;top:526.0px">160</div>
<div class="rp rt b w" style="left:1600px;width:57px;top:526.0px">7</div>
<div class="abs" style="left:1450px;top:506px;width:217px;height:0;border-top:1px dashed #5a5a5a"></div>
</div></body></html>
